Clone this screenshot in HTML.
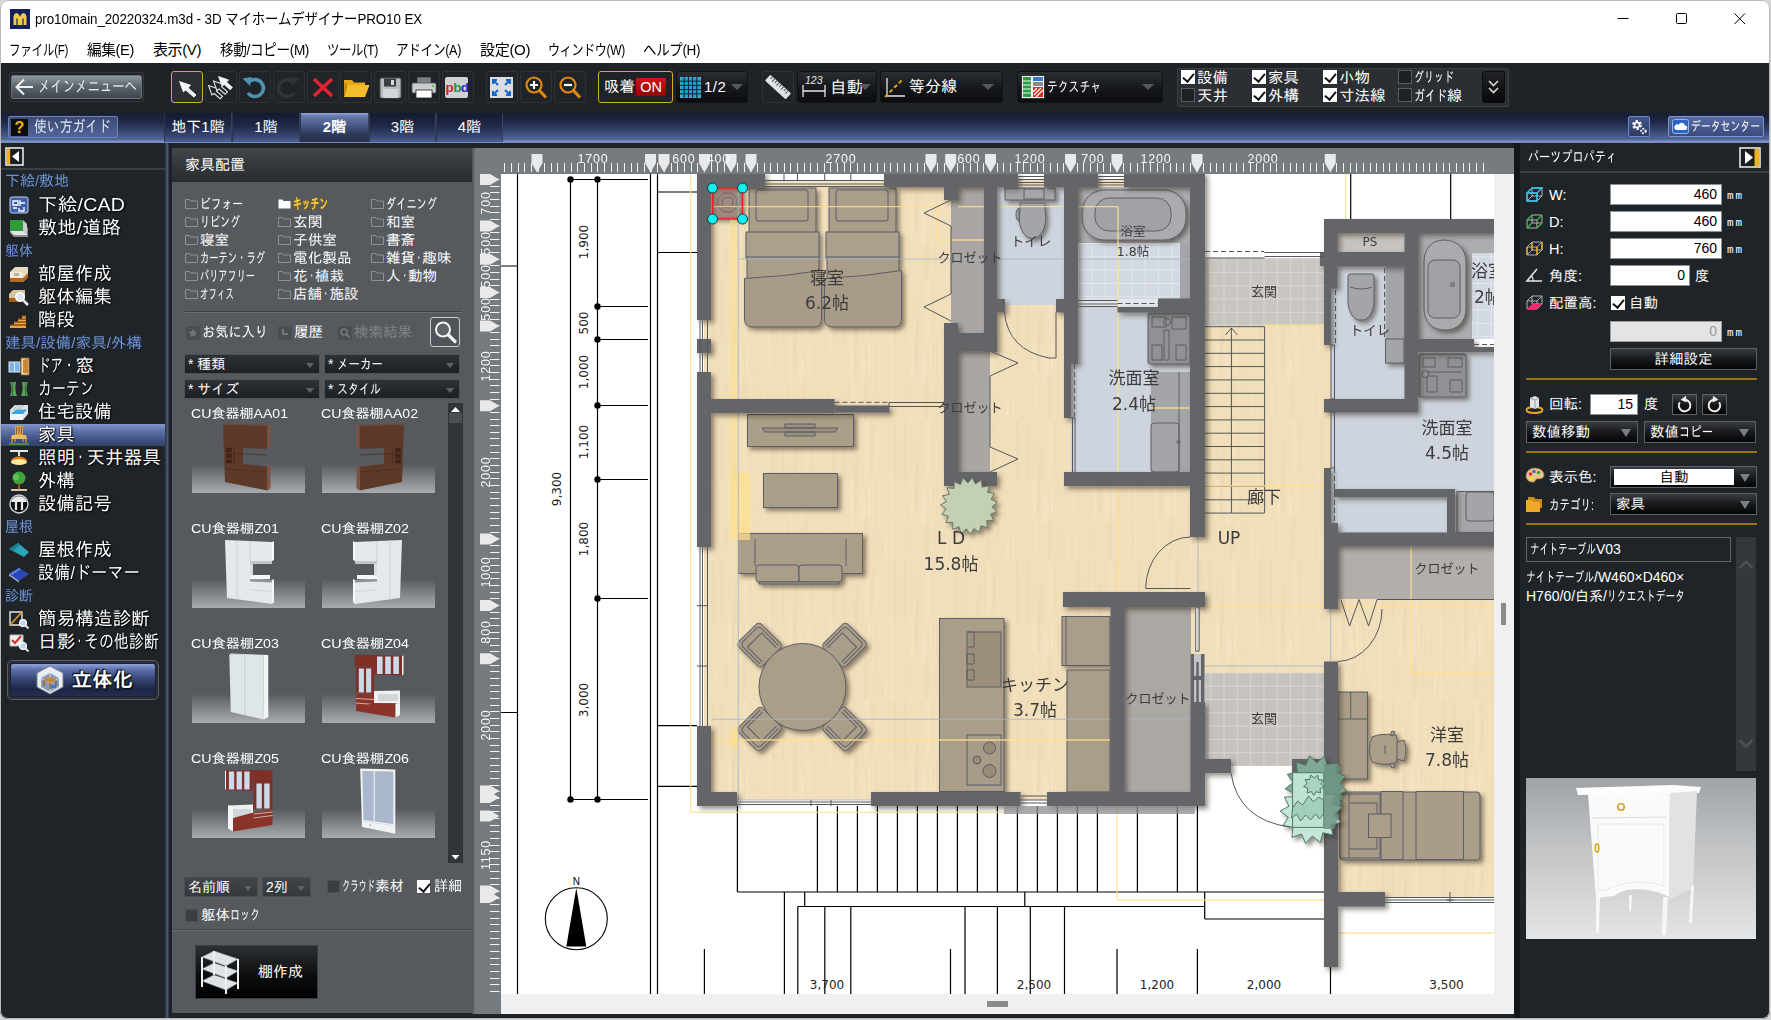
<!DOCTYPE html>
<html lang="ja">
<head>
<meta charset="utf-8">
<title>pro10main_20220324.m3d - 3D マイホームデザイナーPRO10 EX</title>
<style>
*{box-sizing:border-box;margin:0;padding:0}
html,body{width:1771px;height:1020px;overflow:hidden;background:#1f2428}
body{position:relative;font-family:"Liberation Sans","IPAGothic","Noto Sans CJK JP",sans-serif;color:#fff}
.abs{position:absolute}
.sx{display:inline-block;transform-origin:0 50%;white-space:nowrap}
.ui{font-family:"Liberation Sans","IPAGothic","Noto Sans CJK JP",sans-serif}
.noto{font-family:"Liberation Sans","Noto Sans CJK JP",sans-serif}
/* title + menu */
#title{left:0;top:0;width:1771px;height:63px;background:#fff;color:#000}
#title .cap{left:35px;top:8px;font-size:15px;line-height:22px;white-space:nowrap;font-family:"Liberation Sans","Noto Sans CJK JP",sans-serif;letter-spacing:-0.1px}
#menu>span{position:absolute;top:39px;font-size:15px;line-height:22px;white-space:nowrap;font-family:"Liberation Sans","Noto Sans CJK JP",sans-serif;color:#000;letter-spacing:-0.4px}
/* toolbar */
#tool{left:0;top:63px;width:1771px;height:50px;background:#1f2328}
.tb{position:absolute;top:71px;height:32px;width:32px;border:1px solid #2e3236;border-radius:3px;background:#202428}
.dd{position:absolute;top:71px;height:32px;border-radius:3px;background:linear-gradient(#2a2d31,#15171a 55%,#0b0c0e);border:1px solid #111315;font-size:16px;line-height:30px;white-space:nowrap}
.dd i{position:absolute;right:8px;top:12px;border:6px solid transparent;border-top:6px solid #55595e;border-bottom:0}
/* tabbar */
#tabs{left:0;top:113px;width:1771px;height:30px;background:linear-gradient(#171e33 0,#212b49 32%,#384871 62%,#526699 88%,#8499cf 96%,#6c82b6 100%)}
.tab{position:absolute;top:113px;height:29px;font-size:15px;line-height:28px;text-align:center;color:#fff;background:linear-gradient(#141b30,#1d2743 40%,#364670 80%,#4d6096);border-right:1px solid #34415f;border-left:1px solid #2a3550}
.tab.on{background:linear-gradient(#8da3d6 0,#6479ab 12%,#4a5c89 40%,#2c3857 75%,#27314c);font-weight:bold}
/* sidebar */
#side{left:0;top:143px;width:165px;height:877px;background:#1f2428}
.sec{position:absolute;left:5px;font-size:15px;line-height:18px;color:#6d92d8;white-space:nowrap}
.it{position:absolute;left:38px;font-size:18.5px;line-height:23px;color:#fff;white-space:nowrap;text-shadow:0 0 2px #000,1px 1px 2px #000;letter-spacing:0.2px}
.ic{position:absolute;left:8px;width:22px;height:20px}
/* furniture panel */
#pan{left:172px;top:148px;width:300px;height:865px;background:#565a5e}
.cat{position:absolute;font-size:13px;line-height:16px;color:#fff;white-space:nowrap}
.fold{position:absolute;width:10px;height:8px;border:1px solid #8a8d90;border-radius:1px}
.sel{position:absolute;height:20px;background:linear-gradient(#2e3135,#1e2023);border:1px solid #4f5357;font-size:14px;line-height:18px;color:#fff;white-space:nowrap;padding-left:3px}
.sel i{position:absolute;right:5px;top:8px;border:4px solid transparent;border-top:5px solid #5d6165;border-bottom:0}
.thl{position:absolute;font-size:13px;line-height:15px;color:#fff;white-space:nowrap}
.th{position:absolute;width:113px;height:70px;background:linear-gradient(#565a5e 0,#565a5e 58%,#777b7f 75%,#a9acaf 100%);overflow:hidden}
/* right panel */
#prop{left:1520px;top:143px;width:251px;height:877px;background:#1f2428}
.pl{position:absolute;font-size:14.5px;line-height:18px;color:#fff;white-space:nowrap}
.inp{position:absolute;height:21px;background:#fff;border:1px solid #8c8f92;color:#000;font-size:14px;line-height:19px;text-align:right;padding-right:4px;font-family:"Liberation Sans",sans-serif}
.gold{position:absolute;left:1526px;width:231px;height:2px;background:#9a7412}
.btn{position:absolute;height:22px;background:linear-gradient(#3a3d41,#17191b 50%,#050506);border:1px solid #5c6064;color:#fff;font-size:14.5px;line-height:20px;white-space:nowrap}
.btn i{position:absolute;right:6px;top:7px;border:5px solid transparent;border-top:8px solid #7b7f84;border-bottom:0}
</style>
</head>
<body>
<div id="title" class="abs">
 <svg class="abs" style="left:10px;top:9px" width="20" height="20" viewBox="0 0 20 20"><rect width="20" height="20" fill="#14205c"/><path d="M3.5 16 V9 Q3.5 4.5 6.5 4 Q9 4.5 10 8 Q11 4.5 13.5 4 Q16.5 4.5 16.5 9 V16 H13.6 V10 Q13.2 8.6 12.4 10 V16 H7.6 V10 Q6.8 8.6 6.4 10 V16 Z" fill="#f2c94a"/></svg>
 <div class="abs cap"><span class="sx" style="transform:scaleX(0.892);margin-right:-47.0px">pro10main_20220324.m3d - 3D マイホームデザイナーPRO10 EX</span></div>
 <svg class="abs" style="left:1600px;top:0" width="171" height="36" viewBox="0 0 171 36"><g stroke="#000" stroke-width="1" fill="none"><path d="M17.5 18.5h11"/><rect x="76.5" y="13.5" width="10" height="10" rx="1"/><path d="M134.5 13.5l10.5 10.5M145 13.5l-10.5 10.5"/></g></svg>
 <div id="menu">
  <span style="left:9px"><span class="sx" style="transform:scaleX(0.773);margin-right:-17.4px">ファイル(F)</span></span><span style="left:87px"><span class="sx" style="transform:scaleX(0.979);margin-right:-1.0px">編集(E)</span></span><span style="left:153px"><span class="sx" style="transform:scaleX(1.000);margin-right:0.0px">表示(V)</span></span><span style="left:220px"><span class="sx" style="transform:scaleX(0.908);margin-right:-9.1px">移動/コピー(M)</span></span><span style="left:327px"><span class="sx" style="transform:scaleX(0.826);margin-right:-10.8px">ツール(T)</span></span><span style="left:396px"><span class="sx" style="transform:scaleX(0.842);margin-right:-12.2px">アドイン(A)</span></span><span style="left:480px"><span class="sx" style="transform:scaleX(1.007);margin-right:0.3px">設定(O)</span></span><span style="left:548px"><span class="sx" style="transform:scaleX(0.802);margin-right:-19.0px">ウィンドウ(W)</span></span><span style="left:643px"><span class="sx" style="transform:scaleX(0.899);margin-right:-6.4px">ヘルプ(H)</span></span>
 </div>
</div>

<div id="tool" class="abs"></div>
<!-- main menu button -->
<div class="abs" style="left:9px;top:72px;width:135px;height:30px;border:1px solid #34383c;border-radius:3px"></div>
<div class="abs ui" style="left:11px;top:75px;width:131px;height:24px;background:linear-gradient(#8f979f,#5e666e 45%,#3f464d);border:1px solid #6c737a;border-radius:2px;color:#e9edf0;font-size:16px;line-height:22px;white-space:nowrap;padding-left:26px"><span class="sx" style="transform:scaleX(0.773);margin-right:-29.0px">メインメニューへ</span></div>
<svg class="abs" style="left:14px;top:76px" width="22" height="22" viewBox="0 0 22 22"><path d="M19 11H3M10 3.5L2.5 11L10 18.5" fill="none" stroke="#eef1f3" stroke-width="2"/></svg>
<!-- icon buttons -->
<div class="tb" style="left:171px;border:1.5px solid #d9a82a;background:#2c3035"></div>
<div class="tb" style="left:205px"></div><div class="tb" style="left:239px"></div><div class="tb" style="left:273px"></div><div class="tb" style="left:307px"></div><div class="tb" style="left:340px"></div><div class="tb" style="left:374px"></div><div class="tb" style="left:408px"></div><div class="tb" style="left:442px"></div>
<div class="tb" style="left:486px"></div><div class="tb" style="left:520px"></div><div class="tb" style="left:554px"></div><div class="tb" style="left:762px"></div>
<svg class="abs" style="left:171px;top:71px" width="420" height="32" viewBox="0 0 420 32">
 <!-- arrow -->
 <defs><path id="cur" d="M0 0L13.700 4.600L10.800 7.600L18.900 14.700L15.700 17.900L7.600 10.800L4.600 12.700Z"/></defs>
 <use href="#cur" transform="translate(7.200 9.200)" fill="#f4f4f4" stroke="#16181b" stroke-width=".800"/>
 <!-- multi arrows -->
 <use href="#cur" transform="translate(37.500 14.500) scale(.74)" fill="#1f2428" stroke="#e4e4e4" stroke-width="1.500"/>
 <use href="#cur" transform="translate(42.500 10) scale(.74)" fill="#1f2428" stroke="#e4e4e4" stroke-width="1.500"/>
 <use href="#cur" transform="translate(47.500 5.500) scale(.74)" fill="#f4f4f4" stroke="#f4f4f4" stroke-width="1"/>
 <!-- undo -->
 <path d="M78.5 10.5 A8.5 8.5 0 1 1 77 22" fill="none" stroke="#4f93b4" stroke-width="3.6"/><path d="M71.5 7.5 L80.5 6 L79 15 Z" fill="#4f93b4"/>
 <!-- redo (disabled) -->
 <path d="M121.5 10.5 A8.5 8.5 0 1 0 123 22" fill="none" stroke="#2e3438" stroke-width="3.6"/><path d="M128.5 7.5 L119.5 6 L121 15 Z" fill="#2e3438"/>
 <!-- X -->
 <path d="M143 8L161 25M161 8L143 25" stroke="#e0232e" stroke-width="3.6" fill="none"/>
 <!-- folder -->
 <path d="M173 9h8l2 2.5h11v4h-21z" fill="#e6a817"/><path d="M176.5 14h22l-4.5 12h-21z" fill="#f3bd2e"/><path d="M173 11v15l3.5-12" fill="#c98f10"/>
 <!-- save -->
 <rect x="209" y="7" width="21" height="20" rx="1.5" fill="#b9bcbf" stroke="#4b4f53" stroke-width="1"/><rect x="213" y="7.5" width="12" height="8" fill="#3a3d41"/><rect x="220" y="9" width="3" height="5" fill="#d8dadc"/><rect x="212" y="18" width="15" height="9" fill="#d4d6d8"/>
 <!-- print -->
 <rect x="246" y="6" width="14" height="7" fill="#7b7f83" stroke="#222" stroke-width=".6"/><rect x="241" y="12" width="24" height="10" rx="1.5" fill="#c9cccf" stroke="#55595d" stroke-width=".8"/><rect x="245" y="19" width="16" height="8" fill="#fff" stroke="#222" stroke-width=".8"/><rect x="261" y="14" width="2" height="2" fill="#6c3"/>
 <!-- pbd -->
 <rect x="274" y="6" width="23" height="21" rx="2" fill="#cfd1d3"/><text x="274.5" y="21" font-family="Liberation Sans,sans-serif" font-size="13.5" font-weight="bold" letter-spacing="-.6"><tspan fill="#d3202b">p</tspan><tspan fill="#1e9a35">b</tspan><tspan fill="#2330c8">d</tspan></text>
 <!-- fit -->
 <rect x="319" y="6" width="23" height="21" fill="#d9dde0"/><g stroke="#1766c9" stroke-width="2" fill="none"><path d="M322 13v-4h4M322 9l5 5M339 13v-4h-4M339 9l-5 5M322 20v4h4M322 24l5-5M339 20v4h-4M339 24l-5-5"/></g>
 <!-- zoom in -->
 <circle cx="363" cy="14" r="7.5" fill="#1f2428" stroke="#e08a10" stroke-width="2.2"/><path d="M368.5 19.5l6.5 7" stroke="#e08a10" stroke-width="3.2"/><path d="M359 14h8M363 10v8" stroke="#fff" stroke-width="2.2"/>
 <!-- zoom out -->
 <circle cx="397" cy="14" r="7.5" fill="#1f2428" stroke="#e08a10" stroke-width="2.2"/><path d="M402.5 19.5l6.5 7" stroke="#e08a10" stroke-width="3.2"/><path d="M393 14h8" stroke="#fff" stroke-width="2.2"/>
</svg>
<!-- snap ON -->
<div class="abs ui" style="left:598px;top:71px;width:75px;height:32px;border:1.5px solid #d9a82a;border-radius:3px;background:#1f2328;font-size:15.5px;line-height:29px;padding-left:5px;white-space:nowrap">吸着</div>
<div class="abs" style="left:636px;top:78px;width:30px;height:18px;background:linear-gradient(#d01414,#8e0606);color:#fff;font-size:14.5px;line-height:18px;text-align:center;font-family:'Liberation Sans',sans-serif">ON</div>
<!-- grid 1/2 -->
<div class="dd ui" style="left:676px;width:72px;padding-left:27px;font-size:15px;letter-spacing:.5px">1/2<i style="right:4px"></i></div>
<svg class="abs" style="left:680px;top:77px" width="21" height="21" viewBox="0 0 21 21"><rect width="21" height="21" fill="#1aa3d8" stroke="#9aa" stroke-width="1"/><path d="M4.2 0V21M8.4 0V21M12.6 0V21M16.8 0V21M0 4.2H21M0 8.4H21M0 12.6H21M0 16.8H21" stroke="#0b2230" stroke-width="1"/></svg>
<!-- ruler -->
<svg class="abs" style="left:762px;top:71px" width="32" height="32" viewBox="0 0 32 32"><g transform="rotate(42 16 16)"><rect x="2" y="12" width="28" height="8" rx="1" fill="#dfe2e4"/><path d="M5 12v3M8 12v4M11 12v3M14 12v4M17 12v3M20 12v4M23 12v3M26 12v4" stroke="#555" stroke-width="1"/></g></svg>
<!-- auto dimension -->
<div class="dd ui" style="left:797px;width:80px;padding-left:32px;font-size:16.5px">自動<i style="right:5px"></i></div>
<svg class="abs" style="left:800px;top:74px" width="28" height="26" viewBox="0 0 28 26"><path d="M3 11v12M25 11v12M3 17h22" stroke="#e6e6e6" stroke-width="1.3" fill="none"/><text x="5" y="10" font-size="10.5" font-style="italic" fill="#e6e6e6" font-family="Liberation Sans,sans-serif">123</text></svg>
<!-- equal division -->
<div class="dd ui" style="left:880px;width:123px;padding-left:28px;font-size:16px">等分線<i></i></div>
<svg class="abs" style="left:883px;top:76px" width="24" height="24" viewBox="0 0 24 24"><path d="M4 2v18h18" stroke="#e6e6e6" stroke-width="1.3" fill="none"/><path d="M2 21L19 4" stroke="#e0a018" stroke-width="2" stroke-dasharray="4 2.5"/></svg>
<!-- texture -->
<div class="dd ui" style="left:1017px;width:146px;padding-left:29px;font-size:14.5px"><span class="sx" style="transform:scaleX(0.745);margin-right:-18.5px">テクスチャ</span><i></i></div>
<svg class="abs" style="left:1021px;top:75px" width="24" height="24" viewBox="0 0 24 24"><rect x=".5" y=".5" width="23" height="23" fill="#f4f4f4" stroke="#333"/><rect x="2" y="2" width="8" height="20" fill="#2c9a48"/><path d="M2 6h8M2 10h8M2 14h8M2 18h8" stroke="#e8ffe8" stroke-width="1"/><rect x="12" y="2" width="10" height="4" fill="#3a78c9"/><rect x="12" y="7" width="10" height="4" fill="#8a8a8a"/><rect x="12" y="12" width="10" height="10" fill="#d62a1e"/><path d="M13 20l7-7M15 22l7-7M12 17l4-4" stroke="#fff" stroke-width="1.2"/></svg>
<!-- checkbox group -->
<div class="abs" style="left:1177px;top:68px;width:332px;height:39px;background:#2b2f33;border:1px solid #3b3f43;border-radius:2px"></div>
<div class="abs ui" id="cbs" style="left:0;top:0;font-size:15.5px;line-height:17px;white-space:nowrap">
 <b class="abs cb on" style="left:1181px;top:70px"></b><span class="abs" style="left:1197px;top:69px">設備</span>
 <b class="abs cb" style="left:1181px;top:88px"></b><span class="abs" style="left:1197px;top:87px">天井</span>
 <b class="abs cb on" style="left:1252px;top:70px"></b><span class="abs" style="left:1268px;top:69px">家具</span>
 <b class="abs cb on" style="left:1252px;top:88px"></b><span class="abs" style="left:1268px;top:87px">外構</span>
 <b class="abs cb on" style="left:1323px;top:70px"></b><span class="abs" style="left:1339px;top:69px">小物</span>
 <b class="abs cb on" style="left:1323px;top:88px"></b><span class="abs" style="left:1339px;top:87px">寸法線</span>
 <b class="abs cb" style="left:1398px;top:70px"></b><span class="abs" style="left:1414px;top:69px;font-size:14px"><span class="sx" style="transform:scaleX(0.714);margin-right:-16.0px">グリッド</span></span>
 <b class="abs cb" style="left:1398px;top:88px"></b><span class="abs" style="left:1414px;top:87px;font-size:15px"><span class="sx" style="transform:scaleX(0.733);margin-right:-12.0px">ガイド</span>線</span>
</div>
<div class="abs" style="left:1482px;top:71px;width:23px;height:32px;background:linear-gradient(#202225,#08090a);border:1px solid #0c0d0e;border-radius:2px"></div>
<svg class="abs" style="left:1482px;top:71px" width="23" height="32" viewBox="0 0 23 32"><path d="M7 10l4.5 4.5L16 10M7 17l4.5 4.5L16 17" stroke="#d8d8d8" stroke-width="1.6" fill="none"/></svg>
<style>
.cb{width:14px;height:14px;background:#1e2124;border:1px solid #585c60;display:block}
.cb.on{background:#fff;border-color:#fff}
.cb.on:after{content:"";position:absolute;left:3px;top:0px;width:5px;height:9px;border:solid #111;border-width:0 2px 2px 0;transform:rotate(40deg)}
</style>

<div id="tabs" class="abs"></div>
<div class="abs ui" style="left:8px;top:116px;width:110px;height:22px;border:1px solid #6f84b8;border-radius:2px;background:linear-gradient(#3b4a72,#52659a);font-size:16px;line-height:20px;padding-left:25px;color:#dfe6f5;white-space:nowrap;"><span class="sx" style="transform:scaleX(0.802);margin-right:-19.0px">使い方ガイド</span></div>
<div class="abs" style="left:11px;top:119px;width:17px;height:17px;background:#0b0c0e;color:#f0b21a;font:bold 16px/17px 'Liberation Sans',sans-serif;text-align:center">?</div>
<div class="tab ui" style="left:164px;width:68px">地下1階</div>
<div class="tab ui" style="left:232px;width:68px">1階</div>
<div class="tab ui on" style="left:300px;width:69px">2階</div>
<div class="tab ui" style="left:369px;width:67px">3階</div>
<div class="tab ui" style="left:436px;width:67px">4階</div>
<!-- gear + datacenter -->
<div class="abs" style="left:1628px;top:116px;width:22px;height:21px;background:linear-gradient(#44568a,#2c3a63);border:1px solid #7088c0;border-radius:2px"></div>
<svg class="abs" style="left:1628px;top:116px" width="22" height="21" viewBox="0 0 22 21"><circle cx="9" cy="9" r="3.6" fill="none" stroke="#fff" stroke-width="2.6" stroke-dasharray="2.2 1.6"/><circle cx="9" cy="9" r="2.4" fill="none" stroke="#fff" stroke-width="1.5"/><circle cx="15.5" cy="15" r="2.2" fill="none" stroke="#fff" stroke-width="2" stroke-dasharray="1.6 1.2"/></svg>
<div class="abs ui" style="left:1668px;top:116px;width:96px;height:21px;background:linear-gradient(#5569a3,#3b4b7d);border:1px solid #7d93cb;border-radius:2px;font-size:13.5px;line-height:20px;padding-left:22px;white-space:nowrap;color:#fff"><span class="sx" style="transform:scaleX(0.730);margin-right:-25.5px">データセンター</span></div>
<svg class="abs" style="left:1672px;top:119px" width="17" height="15" viewBox="0 0 17 15"><rect x=".5" y=".5" width="16" height="14" rx="2" fill="#2b64c8" stroke="#9bb4e8"/><path d="M4 11h9a2.3 2.3 0 0 0 0-4.6a3.4 3.4 0 0 0-6.4-.6A2.7 2.7 0 0 0 4 11z" fill="#fff"/></svg>

<div id="side" class="abs"></div>
<div class="abs" style="left:0;top:168px;width:165px;height:2px;background:#3a3f44"></div>
<div class="abs" style="left:165px;top:143px;width:7px;height:877px;background:linear-gradient(90deg,#2c3442,#4c5a78 40%,#1c2027 60%,#1f2428)"></div>
<svg class="abs" style="left:5px;top:147px" width="20" height="20" viewBox="0 0 20 20"><rect x="1" y="1" width="17" height="17" fill="#1b1e21" stroke="#e6e6e6" stroke-width="1.6"/><rect x="1.8" y="2" width="3.4" height="15" fill="#f0b21a"/><path d="M14 4v11L7 9.5z" fill="#fff"/></svg>
<div class="abs" style="left:0;top:424px;width:165px;height:22px;background:linear-gradient(#8398cf,#5c70a6 35%,#3a4a7a 80%,#34426c)"></div>
<div class="sec ui" style="top:172px"><span class="sx" style="transform:scaleX(0.997);margin-right:-0.2px">下絵/敷地</span></div>
<div class="sec ui" style="top:242px"><span class="sx" style="transform:scaleX(0.933);margin-right:-2.0px">躯体</span></div>
<div class="sec ui" style="top:334px"><span class="sx" style="transform:scaleX(1.034);margin-right:4.5px">建具/設備/家具/外構</span></div>
<div class="sec ui" style="top:518px"><span class="sx" style="transform:scaleX(0.933);margin-right:-2.0px">屋根</span></div>
<div class="sec ui" style="top:587px"><span class="sx" style="transform:scaleX(0.933);margin-right:-2.0px">診断</span></div>
<svg class="ic" style="top:195px" viewBox="0 0 22 20"><rect x="2" y="2" width="18" height="16" rx="2" fill="#3c5fae" stroke="#c9d4ee"/><path d="M5 6h5v4H5zM12 5v6M12 8h5M5 13h4M11 13v3h5v-4" stroke="#fff" stroke-width="1.3" fill="none"/></svg><div class="it ui" style="top:193px"><span class="sx" style="transform:scaleX(1.056);margin-right:4.6px">下絵/CAD</span></div>
<svg class="ic" style="top:218px" viewBox="0 0 22 20"><path d="M2 6h14l4 4v9H6l-4-4z" fill="#8a8f94"/><rect x="2" y="2" width="13" height="11" fill="#2f9a3c"/><path d="M15 2l4 4v11l-4-4z" fill="#c9cdd1"/><path d="M2 13h13l4 4H6z" fill="#e2e5e8"/></svg><div class="it ui" style="top:216px"><span class="sx" style="transform:scaleX(1.036);margin-right:2.9px">敷地/道路</span></div>
<svg class="ic" style="top:264px" viewBox="0 0 22 20"><path d="M2 8l5-5h13v10l-5 5H2z" fill="#e8d9bd"/><path d="M2 8h13v10H2z" fill="#f4ead6"/><path d="M2 14h13v4H2zM15 14l5-5v4l-5 5z" fill="#b46a1e"/><path d="M6 9h5v3H6z" fill="#b9b3a6"/></svg><div class="it ui" style="top:262px"><span class="sx" style="transform:scaleX(0.989);margin-right:-0.8px">部屋作成</span></div>
<svg class="ic" style="top:287px" viewBox="0 0 22 20"><path d="M1 7l4-4h12v8l-4 4H1z" fill="#d8c39c"/><path d="M1 11h12v4H1z" fill="#a55f1a"/><circle cx="12" cy="10" r="4.2" fill="#dfe8f2" stroke="#fff" stroke-width="1.6"/><path d="M15 13l5 5" stroke="#e9e9e9" stroke-width="2.6"/></svg><div class="it ui" style="top:285px"><span class="sx" style="transform:scaleX(0.989);margin-right:-0.8px">躯体編集</span></div>
<svg class="ic" style="top:310px" viewBox="0 0 22 20"><path d="M18 2v16H2v-3h4v-3h4V9h4V6h4V2z" fill="#e9a444"/><path d="M2 15h16M6 12h12M10 9h8M14 6h4" stroke="#8a4c12" stroke-width="1.4"/></svg><div class="it ui" style="top:308px"><span class="sx" style="transform:scaleX(0.989);margin-right:-0.4px">階段</span></div>
<svg class="ic" style="top:356px" viewBox="0 0 22 20"><rect x="1" y="6" width="11" height="10" fill="#7fb2e6" stroke="#dfe8f4"/><path d="M6.5 6v10" stroke="#dfe8f4"/><path d="M13 2h8v17h-8z" fill="#f0e2c4" stroke="#8b5a22"/><path d="M15 4l5-1.5v15L15 17z" fill="#c98532"/></svg><div class="it ui" style="top:354px"><span class="sx" style="transform:scaleX(0.668);margin-right:-18.6px">ドア・</span>窓</div>
<svg class="ic" style="top:379px" viewBox="0 0 22 20"><path d="M2 3h6c-1 5-1 9 1 14H2c2-5 2-9 0-14z" fill="#5aa15a"/><path d="M20 3h-6c1 5 1 9-1 14h7c-2-5-2-9 0-14z" fill="#5aa15a"/><path d="M4 3c1 5 1 9 0 14M18 3c-1 5-1 9 0 14" stroke="#2f6b2f" fill="none"/></svg><div class="it ui" style="top:377px"><span class="sx" style="transform:scaleX(0.749);margin-right:-18.8px">カーテン</span></div>
<svg class="ic" style="top:402px" viewBox="0 0 22 20"><path d="M2 8l5-5h13v9l-5 6H2z" fill="#dfe3e7"/><path d="M3 12h12l4-4.5H8z" fill="#3aa7e0"/><path d="M2 12h13v6H2z" fill="#f2f4f6"/><path d="M7 3l-5 5M10 3L5 8M13 3L8 8M16 3l-5 5" stroke="#aab0b6"/></svg><div class="it ui" style="top:400px"><span class="sx" style="transform:scaleX(0.989);margin-right:-0.8px">住宅設備</span></div>
<svg class="ic" style="top:425px" viewBox="0 0 22 20"><path d="M7 1h8v9H7z" fill="#d9a64a"/><path d="M8.5 2v7M11 2v7M13.5 2v7" stroke="#8e5f17"/><path d="M4 10h14l1 4H3z" fill="#e9bd62"/><path d="M4 14v5M18 14v5M7 14v3M15 14v3" stroke="#c08a2c" stroke-width="1.6"/><path d="M1 19h20" stroke="#4a8a4a" stroke-width="2"/></svg><div class="it ui" style="top:423px"><span class="sx" style="transform:scaleX(0.989);margin-right:-0.4px">家具</span></div>
<svg class="ic" style="top:448px" viewBox="0 0 22 20"><path d="M2 2h18v2H2z" fill="#e8e8e8"/><path d="M11 4v4" stroke="#ddd" stroke-width="2"/><path d="M3 13c1-6 15-6 16 0z" fill="#e67817"/><ellipse cx="11" cy="14" rx="8" ry="3" fill="#ffe9a0"/></svg><div class="it ui" style="top:446px">照明<span class="sx" style="transform:scaleX(0.588);margin-right:-7.7px">・</span>天井器具</div>
<svg class="ic" style="top:471px" viewBox="0 0 22 20"><circle cx="11" cy="7" r="6.5" fill="#3fa33a"/><circle cx="8" cy="6" r="3" fill="#62c355"/><path d="M10 12h2v6h-2z" fill="#8a5a22"/><path d="M3 19h16" stroke="#d9c9a0" stroke-width="2"/></svg><div class="it ui" style="top:469px"><span class="sx" style="transform:scaleX(0.989);margin-right:-0.4px">外構</span></div>
<svg class="ic" style="top:494px" viewBox="0 0 22 20"><circle cx="11" cy="10" r="9" fill="#0d0e10" stroke="#cfd3d7" stroke-width="1.4"/><path d="M3 8a8.5 8.5 0 0 1 16 0z" fill="#e8eaec"/><path d="M8 8v8M14 8v8" stroke="#e8eaec" stroke-width="2.2"/></svg><div class="it ui" style="top:492px"><span class="sx" style="transform:scaleX(0.989);margin-right:-0.8px">設備記号</span></div>
<svg class="ic" style="top:540px" viewBox="0 0 22 20"><path d="M1 9l9-6l11 9l-5 5z" fill="#2aa5b8"/><path d="M1 9l9-6l2 2l-7 6z" fill="#1d7f8f"/></svg><div class="it ui" style="top:538px"><span class="sx" style="transform:scaleX(0.989);margin-right:-0.8px">屋根作成</span></div>
<svg class="ic" style="top:563px" viewBox="0 0 22 20"><path d="M1 11l10-6l10 6l-10 7z" fill="#2b46b8"/><path d="M1 11l10-6l2 1l-9 6z" fill="#5f7fe8"/><path d="M1 11l10 7v1.5L1 12.5z" fill="#b8c2dc"/></svg><div class="it ui" style="top:561px"><span class="sx" style="transform:scaleX(0.868);margin-right:-15.5px">設備/ドーマー</span></div>
<svg class="ic" style="top:609px" viewBox="0 0 22 20"><path d="M2 3h12v13H2z" fill="none" stroke="#e9e9e9" stroke-width="1.4"/><path d="M2 16L14 3" stroke="#e0a018" stroke-width="1.6"/><circle cx="15" cy="14" r="3.4" fill="#bcd7f2" stroke="#fff" stroke-width="1.2"/><path d="M17.5 16.5l3 3" stroke="#e9e9e9" stroke-width="2"/></svg><div class="it ui" style="top:607px"><span class="sx" style="transform:scaleX(0.998);margin-right:-0.2px">簡易構造診断</span></div>
<svg class="ic" style="top:632px" viewBox="0 0 22 20"><path d="M2 3h13v11H2z" fill="#f2f2f2" stroke="#bbb"/><path d="M4 8l3 3l6-7" stroke="#d62a2a" stroke-width="2" fill="none"/><circle cx="15" cy="14" r="3.4" fill="#bcd7f2" stroke="#fff" stroke-width="1.2"/><path d="M17.5 16.5l3 3" stroke="#e9e9e9" stroke-width="2"/></svg><div class="it ui" style="top:630px">日影<span class="sx" style="transform:scaleX(0.481);margin-right:-9.7px">・</span><span class="sx" style="transform:scaleX(0.802);margin-right:-18.5px">その他診断</span></div>
<div class="abs" style="left:7px;top:660px;width:152px;height:40px;border:1px solid #5a5e63;border-radius:5px;background:#2a2d31"></div>
<div class="abs" style="left:10px;top:663px;width:146px;height:34px;border-radius:3px;border:1px solid #1a2138;background:linear-gradient(#8ea3d8 0,#5b70a8 18%,#33436f 50%,#1d2745 80%,#222d50)"></div>
<svg class="abs" style="left:34px;top:665px" width="32" height="30" viewBox="0 0 32 30"><path d="M16 1l13 7v14l-13 7l-13-7V8z" fill="#e9edf2" stroke="#7a8088"/><path d="M16 8l9 5v9l-9 5l-9-5v-9z" fill="#8a9bb8"/><path d="M16 8v19M7 13l9 5l9-5" stroke="#d5dbe4" fill="none"/><path d="M9 15l7-3l7 3l-7 3z" fill="#c98532"/><path d="M10 16v5M22 16v5M16 18v6" stroke="#8b5a22" stroke-width="1.4"/><path d="M17 20h5v3h-5z" fill="#3a78c9"/></svg>
<div class="abs ui" style="left:72px;top:667px;font-size:20px;line-height:26px;font-weight:bold;color:#fff;text-shadow:0 0 2px #000,1px 1px 2px #000,-1px -1px 1px #000;white-space:nowrap;letter-spacing:.5px">立体化</div>

<div id="pan" class="abs"></div>
<div class="abs" style="left:172px;top:148px;width:300px;height:34px;background:linear-gradient(#43474b,#34383b 50%,#2a2d30)"></div>
<div class="abs ui" style="left:185px;top:155px;font-size:15px;line-height:20px;color:#fff;white-space:nowrap">家具配置</div>
<svg class="abs" style="left:185px;top:198px" width="13" height="11" viewBox="0 0 13 11"><path d="M.5 1.5h4l1 1.5h7v7.5h-12z" fill="none" stroke="#8d9195"/></svg>
<div class="cat ui" style="left:200px;top:196px;font-size:14.5px"><span class="sx" style="transform:scaleX(0.741);margin-right:-15.0px">ビフォー</span></div>
<svg class="abs" style="left:185px;top:216px" width="13" height="11" viewBox="0 0 13 11"><path d="M.5 1.5h4l1 1.5h7v7.5h-12z" fill="none" stroke="#8d9195"/></svg>
<div class="cat ui" style="left:200px;top:214px;font-size:14.5px"><span class="sx" style="transform:scaleX(0.690);margin-right:-18.0px">リビング</span></div>
<svg class="abs" style="left:185px;top:234px" width="13" height="11" viewBox="0 0 13 11"><path d="M.5 1.5h4l1 1.5h7v7.5h-12z" fill="none" stroke="#8d9195"/></svg>
<div class="cat ui" style="left:200px;top:232px;font-size:14.5px"><span class="sx" style="transform:scaleX(1.000);margin-right:0.0px">寝室</span></div>
<svg class="abs" style="left:185px;top:252px" width="13" height="11" viewBox="0 0 13 11"><path d="M.5 1.5h4l1 1.5h7v7.5h-12z" fill="none" stroke="#8d9195"/></svg>
<div class="cat ui" style="left:200px;top:250px;font-size:14.5px"><span class="sx" style="transform:scaleX(0.640);margin-right:-36.5px">カーテン・ラグ</span></div>
<svg class="abs" style="left:185px;top:270px" width="13" height="11" viewBox="0 0 13 11"><path d="M.5 1.5h4l1 1.5h7v7.5h-12z" fill="none" stroke="#8d9195"/></svg>
<div class="cat ui" style="left:200px;top:268px;font-size:14.5px"><span class="sx" style="transform:scaleX(0.632);margin-right:-32.0px">バリアフリー</span></div>
<svg class="abs" style="left:185px;top:288px" width="13" height="11" viewBox="0 0 13 11"><path d="M.5 1.5h4l1 1.5h7v7.5h-12z" fill="none" stroke="#8d9195"/></svg>
<div class="cat ui" style="left:200px;top:286px;font-size:14.5px"><span class="sx" style="transform:scaleX(0.586);margin-right:-24.0px">オフィス</span></div>
<svg class="abs" style="left:278px;top:198px" width="13" height="11" viewBox="0 0 13 11"><path d="M.5 1.5h4l1 1.5h7v7.5h-12z" fill="#fff"/></svg>
<div class="cat ui" style="left:293px;top:196px;font-size:14.5px;color:#ffd23a;font-weight:bold;text-shadow:0 0 3px #a06a00"><span class="sx" style="transform:scaleX(0.603);margin-right:-23.0px">キッチン</span></div>
<svg class="abs" style="left:278px;top:216px" width="13" height="11" viewBox="0 0 13 11"><path d="M.5 1.5h4l1 1.5h7v7.5h-12z" fill="none" stroke="#8d9195"/></svg>
<div class="cat ui" style="left:293px;top:214px;font-size:14.5px"><span class="sx" style="transform:scaleX(1.021);margin-right:0.6px">玄関</span></div>
<svg class="abs" style="left:278px;top:234px" width="13" height="11" viewBox="0 0 13 11"><path d="M.5 1.5h4l1 1.5h7v7.5h-12z" fill="none" stroke="#8d9195"/></svg>
<div class="cat ui" style="left:293px;top:232px;font-size:14.5px"><span class="sx" style="transform:scaleX(1.011);margin-right:0.5px">子供室</span></div>
<svg class="abs" style="left:278px;top:252px" width="13" height="11" viewBox="0 0 13 11"><path d="M.5 1.5h4l1 1.5h7v7.5h-12z" fill="none" stroke="#8d9195"/></svg>
<div class="cat ui" style="left:293px;top:250px;font-size:14.5px"><span class="sx" style="transform:scaleX(1.009);margin-right:0.5px">電化製品</span></div>
<svg class="abs" style="left:278px;top:270px" width="13" height="11" viewBox="0 0 13 11"><path d="M.5 1.5h4l1 1.5h7v7.5h-12z" fill="none" stroke="#8d9195"/></svg>
<div class="cat ui" style="left:293px;top:268px;font-size:14.5px">花<span class="sx" style="transform:scaleX(0.517);margin-right:-7.0px">・</span>植栽</div>
<svg class="abs" style="left:278px;top:288px" width="13" height="11" viewBox="0 0 13 11"><path d="M.5 1.5h4l1 1.5h7v7.5h-12z" fill="none" stroke="#8d9195"/></svg>
<div class="cat ui" style="left:293px;top:286px;font-size:14.5px">店舗<span class="sx" style="transform:scaleX(0.517);margin-right:-7.0px">・</span>施設</div>
<svg class="abs" style="left:371px;top:198px" width="13" height="11" viewBox="0 0 13 11"><path d="M.5 1.5h4l1 1.5h7v7.5h-12z" fill="none" stroke="#8d9195"/></svg>
<div class="cat ui" style="left:386px;top:196px;font-size:14.5px"><span class="sx" style="transform:scaleX(0.703);margin-right:-21.5px">ダイニング</span></div>
<svg class="abs" style="left:371px;top:216px" width="13" height="11" viewBox="0 0 13 11"><path d="M.5 1.5h4l1 1.5h7v7.5h-12z" fill="none" stroke="#8d9195"/></svg>
<div class="cat ui" style="left:386px;top:214px;font-size:14.5px"><span class="sx" style="transform:scaleX(1.000);margin-right:0.0px">和室</span></div>
<svg class="abs" style="left:371px;top:234px" width="13" height="11" viewBox="0 0 13 11"><path d="M.5 1.5h4l1 1.5h7v7.5h-12z" fill="none" stroke="#8d9195"/></svg>
<div class="cat ui" style="left:386px;top:232px;font-size:14.5px"><span class="sx" style="transform:scaleX(1.000);margin-right:0.0px">書斎</span></div>
<svg class="abs" style="left:371px;top:252px" width="13" height="11" viewBox="0 0 13 11"><path d="M.5 1.5h4l1 1.5h7v7.5h-12z" fill="none" stroke="#8d9195"/></svg>
<div class="cat ui" style="left:386px;top:250px;font-size:14.5px">雑貨<span class="sx" style="transform:scaleX(0.517);margin-right:-7.0px">・</span>趣味</div>
<svg class="abs" style="left:371px;top:270px" width="13" height="11" viewBox="0 0 13 11"><path d="M.5 1.5h4l1 1.5h7v7.5h-12z" fill="none" stroke="#8d9195"/></svg>
<div class="cat ui" style="left:386px;top:268px;font-size:14.5px">人<span class="sx" style="transform:scaleX(0.517);margin-right:-7.0px">・</span>動物</div>
<div class="abs" style="left:185px;top:311px;width:277px;height:2px;background:#3e4246;border-bottom:1px solid #6a6e72"></div>
<svg class="abs" style="left:186px;top:326px" width="14" height="14" viewBox="0 0 14 14"><rect width="14" height="14" rx="2" fill="#4a4e52"/><path d="M7 2.5l1.4 3l3.1.3l-2.3 2.1l.7 3.1L7 9.4L4.1 11l.7-3.1L2.5 5.800l3.1-.3z" fill="#6f7377"/></svg>
<div class="cat ui" style="left:202px;top:324px;font-size:14.5px"><span class="sx" style="transform:scaleX(0.910);margin-right:-6.5px">お気に入り</span></div>
<svg class="abs" style="left:278px;top:326px" width="14" height="14" viewBox="0 0 14 14"><rect width="14" height="14" rx="2" fill="#4a4e52"/><path d="M5 3v5h5" stroke="#74787c" stroke-width="2" fill="none"/></svg>
<div class="cat ui" style="left:294px;top:324px;font-size:14.5px">履歴</div>
<svg class="abs" style="left:338px;top:326px" width="14" height="14" viewBox="0 0 14 14"><rect width="14" height="14" rx="2" fill="#4a4e52"/><circle cx="6" cy="6" r="3" stroke="#74787c" stroke-width="1.6" fill="none"/><path d="M8.500 8.500l3 3" stroke="#74787c" stroke-width="1.800"/></svg>
<div class="cat ui" style="left:354px;top:324px;font-size:14.5px;color:#7f8387">検索結果</div>
<div class="abs" style="left:430px;top:317px;width:30px;height:30px;border:1.500px solid #c9ccce;border-radius:3px;background:#50545a"></div>
<svg class="abs" style="left:430px;top:317px" width="30" height="30" viewBox="0 0 30 30"><circle cx="13" cy="12.500" r="7" fill="#5f6469" stroke="#f2f2f2" stroke-width="2"/><path d="M18.500 18l6.500 6.500" stroke="#f2f2f2" stroke-width="3.200" stroke-linecap="round"/></svg>
<div class="sel ui" style="left:184px;top:354px;width:136px">* 種類<i></i></div>
<div class="sel ui" style="left:324px;top:354px;width:136px">* <span class="sx" style="transform:scaleX(0.821);margin-right:-10.0px">メーカー</span><i></i></div>
<div class="sel ui" style="left:184px;top:379px;width:136px">* サイズ<i></i></div>
<div class="sel ui" style="left:324px;top:379px;width:136px">* <span class="sx" style="transform:scaleX(0.786);margin-right:-12.0px">スタイル</span><i></i></div>
<div class="thl ui" style="left:191px;top:406px"><span class="sx" style="transform:scaleX(1.083);margin-right:7.4px">CU食器棚AA01</span></div>
<div class="th" style="left:192px;top:423px"><svg width="113" height="70" viewBox="0 0 113 70"><g><path d="M31 1.500L75.500 3V26L51 25V41L75.500 43.500V67.500L33 59Z" fill="#5c3929"/><path d="M75.500 3l3-1v22l-3 2zM75.500 43.500l3-1.500v23l-3 2.500z" fill="#7d5444"/><path d="M33 30L75 32M33 46l42 3" stroke="#4c2e20" stroke-width=".800" fill="none"/><path d="M34.500 25h5v4h-5zM34.500 31h5v4h-5zM34.500 37h5v3h-5zM42 25v16" fill="#3e2418" stroke="#3e2418" stroke-width=".600"/><path d="M31 1.500l1-1l46.500 1.500l-3 1z" fill="#6e4838"/></g></svg></div>
<div class="thl ui" style="left:321px;top:406px"><span class="sx" style="transform:scaleX(1.083);margin-right:7.4px">CU食器棚AA02</span></div>
<div class="th" style="left:322px;top:423px"><svg width="113" height="70" viewBox="0 0 113 70"><g transform="translate(113,0) scale(-1,1)"><path d="M31 1.500L75.500 3V26L51 25V41L75.500 43.500V67.500L33 59Z" fill="#5c3929"/><path d="M75.500 3l3-1v22l-3 2zM75.500 43.500l3-1.500v23l-3 2.500z" fill="#7d5444"/><path d="M33 30L75 32M33 46l42 3" stroke="#4c2e20" stroke-width=".800" fill="none"/><path d="M34.500 25h5v4h-5zM34.500 31h5v4h-5zM34.500 37h5v3h-5zM42 25v16" fill="#3e2418" stroke="#3e2418" stroke-width=".600"/><path d="M31 1.500l1-1l46.500 1.500l-3 1z" fill="#6e4838"/></g></svg></div>
<div class="thl ui" style="left:191px;top:521px"><span class="sx" style="transform:scaleX(1.097);margin-right:7.8px">CU食器棚Z01</span></div>
<div class="th" style="left:192px;top:538px"><svg width="113" height="70" viewBox="0 0 113 70"><g><path d="M33 2L80 4V23H58V41L80 42V66L35 60Z" fill="#e4eaec"/><path d="M80 4l2-1v19l-2 1zM80 42l2-1v23l-2 2z" fill="#f6f7f7"/><path d="M45 2.500V62M58 3V23" stroke="#c9d0d4" stroke-width="1" fill="none"/><path d="M58 23h22v3H58z" fill="#bfc5c9"/><path d="M58 41l22 1v2.500l-22-1z" fill="#8e959b"/><path d="M58 37h20v4H58z" fill="#f4f6f7"/><path d="M58 26h3v11h-3z" fill="#d5dbde"/><path d="M58 52l22 1.500" stroke="#cdd3d6" stroke-width=".800"/></g></svg></div>
<div class="thl ui" style="left:321px;top:521px"><span class="sx" style="transform:scaleX(1.097);margin-right:7.8px">CU食器棚Z02</span></div>
<div class="th" style="left:322px;top:538px"><svg width="113" height="70" viewBox="0 0 113 70"><g transform="translate(113,0) scale(-1,1)"><path d="M33 2L80 4V23H58V41L80 42V66L35 60Z" fill="#e4eaec"/><path d="M80 4l2-1v19l-2 1zM80 42l2-1v23l-2 2z" fill="#f6f7f7"/><path d="M45 2.500V62M58 3V23" stroke="#c9d0d4" stroke-width="1" fill="none"/><path d="M58 23h22v3H58z" fill="#bfc5c9"/><path d="M58 41l22 1v2.500l-22-1z" fill="#8e959b"/><path d="M58 37h20v4H58z" fill="#f4f6f7"/><path d="M58 26h3v11h-3z" fill="#d5dbde"/><path d="M58 52l22 1.500" stroke="#cdd3d6" stroke-width=".800"/></g></svg></div>
<div class="thl ui" style="left:191px;top:636px"><span class="sx" style="transform:scaleX(1.097);margin-right:7.8px">CU食器棚Z03</span></div>
<div class="th" style="left:192px;top:653px"><svg width="113" height="70" viewBox="0 0 113 70"><path d="M37.300 1.500L71.800 2V66.600L38.800 59Z" fill="#dfe6e8"/><path d="M71.800 2l4.500 0V64l-4.500 2.600z" fill="#f3f4f4"/><path d="M52.800 1.800V62.500" stroke="#c5cdd1" stroke-width="1"/><path d="M37.300 1.500l1.500-1l37.500 1.500l-4.500 0z" fill="#f6f7f7"/></svg></div>
<div class="thl ui" style="left:321px;top:636px"><span class="sx" style="transform:scaleX(1.097);margin-right:7.8px">CU食器棚Z04</span></div>
<div class="th" style="left:322px;top:653px"><svg width="113" height="70" viewBox="0 0 113 70"><path d="M32.500 2L52 2V14L32.500 13.500Z" fill="#7e2f26"/><path d="M52 2L80 3V22.500L52 21.500Z" fill="#7e2f26"/><rect x="55.0" y="3.5" width="5.6" height="17.5" fill="#cdd9e8"/><rect x="63.2" y="3.5" width="5.6" height="17.5" fill="#cdd9e8"/><rect x="71.3" y="3.5" width="5.6" height="17.5" fill="#cdd9e8"/><path d="M34 14L52 14.500V41L34 40Z" fill="#7e2f26"/><rect x="36.8" y="15.5" width="5.1" height="24.0" fill="#cdd9e8"/><rect x="44.1" y="15.5" width="5.1" height="24.0" fill="#cdd9e8"/><path d="M52 38L78 37.500V50L52 50Z" fill="#eef0f1"/><path d="M56 41h20v7H56z" fill="#d0d5d8"/><path d="M34 41L52 41.500V58L34 55Z" fill="#8a3328"/><path d="M34 45.500l18 1M34 50l18 1.500" stroke="#e6cfc9" stroke-width=".800"/><path d="M34 55L52 50L73.500 50.500V64.500L34 58Z" fill="#8a3328"/><path d="M73.500 50.500l4.500-.5V62l-4.500 2.500z" fill="#f0f1f2"/><path d="M80 3l1.500-.5v19l-1.500 1z" fill="#f0f1f2"/></svg></div>
<div class="thl ui" style="left:191px;top:751px"><span class="sx" style="transform:scaleX(1.097);margin-right:7.8px">CU食器棚Z05</span></div>
<div class="th" style="left:192px;top:768px"><svg width="113" height="70" viewBox="0 0 113 70"><path d="M34 2.500L60.500 2V23L34 22Z" fill="#7e2f26"/><rect x="36.9" y="3.5" width="5.3" height="18.0" fill="#cdd9e8"/><rect x="44.6" y="3.5" width="5.3" height="18.0" fill="#cdd9e8"/><rect x="52.3" y="3.5" width="5.3" height="18.0" fill="#cdd9e8"/><path d="M60.500 2L80.500 2.500V14L60.500 14Z" fill="#7e2f26"/><path d="M61.500 14L80.500 14V41.500L61.500 41Z" fill="#7e2f26"/><rect x="64.4" y="15.5" width="5.4" height="25.0" fill="#cdd9e8"/><rect x="72.2" y="15.5" width="5.4" height="25.0" fill="#cdd9e8"/><path d="M36 37.500L61 36.500V54L41 57L36 54Z" fill="#eef0f1"/><path d="M40 41h19v8H40z" fill="#d0d5d8"/><path d="M41 50L61.500 44.500L80.500 42V57L41 63.500Z" fill="#8a3328"/><path d="M61.500 46l19-2M61.500 50l19-2.500" stroke="#e6cfc9" stroke-width=".800"/><path d="M34 2.500l-1 .5V21l1 1zM36 37.500l5 1V63.500l-5-3z" fill="#f4f5f5"/></svg></div>
<div class="thl ui" style="left:321px;top:751px"><span class="sx" style="transform:scaleX(1.097);margin-right:7.8px">CU食器棚Z06</span></div>
<div class="th" style="left:322px;top:768px"><svg width="113" height="70" viewBox="0 0 113 70"><path d="M38.200 .600L73.300 1.500V65.800L40 59Z" fill="#f1f2f3"/><path d="M40.300 3L71.300 3.500V56L41.500 52Z" fill="#a9b8cc"/><path d="M52.200 3.200V53.500" stroke="#e9edf1" stroke-width="1.200"/><path d="M41.500 53.500l30 4" stroke="#d9dcde" stroke-width=".800"/><circle cx="48" cy="57" r=".800" fill="#999"/></svg></div>
<div class="abs" style="left:448px;top:403px;width:15px;height:460px;background:#31353a"></div>
<div class="abs" style="left:449px;top:413px;width:13px;height:10px;background:#4b4f53"></div>
<svg class="abs" style="left:448px;top:403px" width="15" height="460" viewBox="0 0 15 460"><path d="M3 9l4.500-5l4.500 5z" fill="#fff"/><path d="M3.500 452h8l-4 4.500z" fill="#fff"/></svg>
<div class="sel ui" style="left:184px;top:877px;width:74px;background:linear-gradient(#404448,#35393d);border-color:#4b4f53">名前順<i></i></div>
<div class="sel ui" style="left:262px;top:877px;width:49px;background:linear-gradient(#404448,#35393d);border-color:#4b4f53">2列<i></i></div>
<div class="abs" style="left:327px;top:880px;width:13px;height:13px;background:#3a3e42;border:1px solid #4c5054"></div>
<div class="cat ui" style="left:342px;top:878px;font-size:14.5px"><span class="sx" style="transform:scaleX(0.569);margin-right:-25.0px">クラウド</span>素材</div>
<b class="abs cb on" style="left:417px;top:880px;width:13px;height:13px"></b>
<div class="cat ui" style="left:434px;top:878px;font-size:14.5px"><span class="sx" style="transform:scaleX(0.966);margin-right:-1.0px">詳細</span></div>
<div class="abs" style="left:185px;top:909px;width:13px;height:13px;background:#3a3e42;border:1px solid #4c5054"></div>
<div class="cat ui" style="left:201px;top:907px;font-size:14.5px">躯体<span class="sx" style="transform:scaleX(0.690);margin-right:-13.5px">ロック</span></div>
<div class="abs" style="left:172px;top:929px;width:300px;height:2px;background:#45494d;border-bottom:1px solid #65696d"></div>
<div class="abs" style="left:195px;top:945px;width:123px;height:54px;background:linear-gradient(#2d3033,#0d0e0f 55%,#000);border:1px solid #3b3e41"></div>
<svg class="abs" style="left:200px;top:949px" width="42" height="46" viewBox="0 0 42 46"><g fill="#dfe3e6" stroke="#9aa0a6" stroke-width=".600"><path d="M2 8l12-6l24 8l-12 7z"/><path d="M2 20l12-6l24 8l-12 7z"/><path d="M2 32l12-6l24 8l-12 7z"/></g><path d="M2 8v30M26 17v28M38 10v30M14 2v24" stroke="#eef0f2" stroke-width="2"/></svg>
<div class="abs ui" style="left:258px;top:962px;font-size:15px;line-height:20px;color:#fff;white-space:nowrap">棚作成</div>

<div class="abs" style="left:472px;top:148px;width:1042px;height:866px;background:#767b80"></div>
<div class="abs" style="left:472px;top:148px;width:3px;height:866px;background:linear-gradient(90deg,#505459,#6d7277)"></div>
<svg class="abs" style="left:0;top:0" width="1771" height="1020" viewBox="0 0 1771 1020" font-family="'DejaVu Sans','Liberation Sans',sans-serif">
<defs>
<pattern id="wood" width="61" height="140" patternUnits="userSpaceOnUse"><rect width="61" height="140" fill="#f1dfbc"/>
<rect x="19.4" y="2.6" width="1" height="67" fill="#f6e4c0" opacity="0.14"/>
<rect x="35.0" y="116.5" width="1" height="39" fill="#ecd5aa" opacity="0.20"/>
<rect x="14.4" y="62.7" width="3" height="29" fill="#f8e8c8" opacity="0.31"/>
<rect x="37.8" y="67.4" width="3" height="29" fill="#ecd5aa" opacity="0.13"/>
<rect x="13.3" y="63.5" width="2" height="34" fill="#fbeed2" opacity="0.23"/>
<rect x="34.3" y="64.0" width="1" height="69" fill="#f6e4c0" opacity="0.23"/>
<rect x="11.3" y="-5.4" width="3" height="71" fill="#f8e8c8" opacity="0.24"/>
<rect x="29.8" y="59.8" width="2" height="76" fill="#f6e4c0" opacity="0.30"/>
<rect x="21.7" y="17.3" width="1" height="37" fill="#f8e8c8" opacity="0.23"/>
<rect x="31.5" y="111.3" width="1.5" height="72" fill="#f6e4c0" opacity="0.32"/>
<rect x="7.1" y="42.7" width="1" height="74" fill="#ecd5aa" opacity="0.20"/>
<rect x="57.7" y="-8.4" width="1.5" height="61" fill="#e9d0a2" opacity="0.26"/>
<rect x="35.7" y="67.0" width="1" height="55" fill="#e9d0a2" opacity="0.21"/>
<rect x="39.8" y="-10.9" width="3" height="71" fill="#e6cb9c" opacity="0.28"/>
<rect x="17.1" y="37.9" width="1" height="68" fill="#ecd5aa" opacity="0.19"/>
<rect x="36.7" y="54.1" width="1.5" height="39" fill="#fbeed2" opacity="0.27"/>
<rect x="23.9" y="117.5" width="1" height="57" fill="#ecd5aa" opacity="0.20"/>
<rect x="16.7" y="0.5" width="3" height="53" fill="#e9d0a2" opacity="0.26"/>
<rect x="59.2" y="82.4" width="1" height="50" fill="#fbeed2" opacity="0.14"/>
<rect x="9.1" y="78.8" width="3" height="26" fill="#fbeed2" opacity="0.17"/>
<rect x="0.2" y="42.8" width="3" height="49" fill="#e9d0a2" opacity="0.31"/>
<rect x="41.4" y="57.3" width="1" height="65" fill="#ecd5aa" opacity="0.30"/>
<rect x="46.8" y="111.2" width="2" height="77" fill="#ecd5aa" opacity="0.20"/>
<rect x="6.2" y="75.1" width="1" height="29" fill="#fbeed2" opacity="0.21"/>
<rect x="6.6" y="70.1" width="3" height="32" fill="#fbeed2" opacity="0.23"/>
<rect x="56.9" y="72.1" width="1" height="30" fill="#f6e4c0" opacity="0.20"/>
<rect x="38.1" y="123.3" width="2" height="64" fill="#f8e8c8" opacity="0.14"/>
<rect x="29.3" y="126.7" width="1.5" height="56" fill="#f8e8c8" opacity="0.15"/>
<rect x="45.0" y="91.1" width="1" height="56" fill="#f6e4c0" opacity="0.12"/>
<rect x="57.1" y="59.2" width="3" height="35" fill="#f8e8c8" opacity="0.27"/>
<rect x="17.9" y="76.4" width="1.5" height="31" fill="#f6e4c0" opacity="0.19"/>
<rect x="10.0" y="95.8" width="3" height="60" fill="#e9d0a2" opacity="0.25"/>
<rect x="36.8" y="98.3" width="1" height="74" fill="#fbeed2" opacity="0.28"/>
<rect x="44.4" y="14.0" width="1.5" height="59" fill="#e6cb9c" opacity="0.13"/>
<rect x="1.7" y="21.9" width="3" height="42" fill="#e9d0a2" opacity="0.21"/>
<rect x="56.2" y="128.2" width="1.5" height="87" fill="#f8e8c8" opacity="0.16"/>
<rect x="13.6" y="9.5" width="3" height="38" fill="#f6e4c0" opacity="0.29"/>
<rect x="28.8" y="77.9" width="1" height="77" fill="#e6cb9c" opacity="0.14"/>
<rect x="23.3" y="86.7" width="1" height="38" fill="#ecd5aa" opacity="0.28"/>
<rect x="20.0" y="100.1" width="2" height="88" fill="#ecd5aa" opacity="0.20"/>
<rect x="56.8" y="88.7" width="1" height="36" fill="#f8e8c8" opacity="0.15"/>
<rect x="54.3" y="101.0" width="3" height="35" fill="#ecd5aa" opacity="0.25"/>
<rect x="21.0" y="62.3" width="1" height="34" fill="#e6cb9c" opacity="0.25"/>
<rect x="31.6" y="120.0" width="1" height="53" fill="#fbeed2" opacity="0.13"/>
<rect x="12.8" y="55.2" width="1.5" height="75" fill="#e9d0a2" opacity="0.23"/>
<rect x="50.1" y="-10.9" width="2" height="73" fill="#e6cb9c" opacity="0.24"/>
</pattern>
<pattern id="tile" x="1210.2" y="258.600" width="13.312" height="13.312" patternUnits="userSpaceOnUse"><rect width="13.312" height="13.312" fill="#c9c5c0"/><path d="M0 .5H13.400M.5 0V13.400" stroke="#dad7d3" stroke-width="1"/></pattern>
<pattern id="tile2" x="1210.2" y="672.400" width="13.312" height="13.312" patternUnits="userSpaceOnUse"><rect width="13.312" height="13.312" fill="#c6c3bf"/><path d="M0 .5H13.400M.5 0V13.400" stroke="#d9d6d3" stroke-width="1"/></pattern>
<pattern id="btile" x="1078" y="243" width="13.312" height="13.312" patternUnits="userSpaceOnUse"><rect width="13.312" height="13.312" fill="#d3d9e2"/><path d="M0 .5H13.400M.5 0V13.400" stroke="#e3e7ed" stroke-width="1"/></pattern>
<filter id="sh" x="-5%" y="-5%" width="115%" height="115%"><feDropShadow dx="3" dy="3" stdDeviation="2.500" flood-color="#2a2418" flood-opacity=".5"/></filter>
<filter id="sh2" x="-10%" y="-10%" width="130%" height="130%"><feDropShadow dx="3" dy="3" stdDeviation="2.200" flood-color="#2a2418" flood-opacity=".5"/></filter>
<clipPath id="cv"><rect x="501" y="174" width="993" height="820"/></clipPath>
</defs>
<rect x="501" y="174" width="993" height="820" fill="#fff"/>
<rect x="1494" y="174" width="20" height="840" fill="#f0f0f0"/><rect x="501" y="994" width="1013" height="20" fill="#f0f0f0"/>
<rect x="1501" y="603" width="5" height="22" fill="#8a8a8a"/><rect x="987" y="1001" width="21" height="6" fill="#8a8a8a"/>
<path d="M504.5 163V172M511.5 163V172M518.5 163V172M524.5 163V172M531.5 163V172M538.5 163V172M544.5 163V172M551.5 163V172M557.5 163V172M564.5 163V172M571.5 163V172M577.5 163V172M584.5 163V172M591.5 163V172M597.5 163V172M604.5 163V172M611.5 163V172M617.5 163V172M624.5 163V172M631.5 163V172M637.5 163V172M644.5 163V172M651.5 163V172M657.5 163V172M664.5 163V172M671.5 163V172M677.5 163V172M684.5 163V172M691.5 163V172M697.5 163V172M704.5 163V172M711.5 163V172M717.5 163V172M724.5 163V172M731.5 163V172M737.5 163V172M744.5 163V172M750.5 163V172M757.5 163V172M764.5 163V172M770.5 163V172M777.5 163V172M784.5 163V172M790.5 163V172M797.5 163V172M804.5 163V172M810.5 163V172M817.5 163V172M824.5 163V172M830.5 163V172M837.5 163V172M844.5 163V172M850.5 163V172M857.5 163V172M864.5 163V172M870.5 163V172M877.5 163V172M884.5 163V172M890.5 163V172M897.5 163V172M904.5 163V172M910.5 163V172M917.5 163V172M924.5 163V172M930.5 163V172M937.5 163V172M944.5 163V172M950.5 163V172M957.5 163V172M963.5 163V172M970.5 163V172M977.5 163V172M983.5 163V172M990.5 163V172M997.5 163V172M1003.5 163V172M1010.5 163V172M1017.5 163V172M1023.5 163V172M1030.5 163V172M1037.5 163V172M1043.5 163V172M1050.5 163V172M1057.5 163V172M1063.5 163V172M1070.5 163V172M1077.5 163V172M1083.5 163V172M1090.5 163V172M1097.5 163V172M1103.5 163V172M1110.5 163V172M1117.5 163V172M1123.5 163V172M1130.5 163V172M1137.5 163V172M1143.5 163V172M1150.5 163V172M1157.5 163V172M1163.5 163V172M1170.5 163V172M1176.5 163V172M1183.5 163V172M1190.5 163V172M1196.5 163V172M1203.5 163V172M1210.5 163V172M1216.5 163V172M1223.5 163V172M1230.5 163V172M1236.5 163V172M1243.5 163V172M1250.5 163V172M1256.5 163V172M1263.5 163V172M1270.5 163V172M1276.5 163V172M1283.5 163V172M1290.5 163V172M1296.5 163V172M1303.5 163V172M1310.5 163V172M1316.5 163V172M1323.5 163V172M1330.5 163V172M1336.5 163V172M1343.5 163V172M1350.5 163V172M1356.5 163V172M1363.5 163V172M1370.5 163V172M1376.5 163V172M1383.5 163V172M1389.5 163V172M1396.5 163V172M1403.5 163V172M1409.5 163V172M1416.5 163V172M1423.5 163V172M1429.5 163V172M1436.5 163V172M1443.5 163V172M1449.5 163V172M1456.5 163V172M1463.5 163V172M1469.5 163V172M1476.5 163V172M1483.5 163V172" stroke="#f4f4f4" stroke-width="1" fill="none"/>
<path d="M490 179.5H499.500M490 186.5H499.500M490 192.5H499.500M490 199.5H499.500M490 206.5H499.500M490 212.5H499.500M490 219.5H499.500M490 225.5H499.500M490 232.5H499.500M490 239.5H499.500M490 245.5H499.500M490 252.5H499.500M490 259.5H499.500M490 265.5H499.500M490 272.5H499.500M490 279.5H499.500M490 285.5H499.500M490 292.5H499.500M490 299.5H499.500M490 305.5H499.500M490 312.5H499.500M490 319.5H499.500M490 325.5H499.500M490 332.5H499.500M490 339.5H499.500M490 345.5H499.500M490 352.5H499.500M490 359.5H499.500M490 365.5H499.500M490 372.5H499.500M490 379.5H499.500M490 385.5H499.500M490 392.5H499.500M490 399.5H499.500M490 405.5H499.500M490 412.5H499.500M490 419.5H499.500M490 425.5H499.500M490 432.5H499.500M490 438.5H499.500M490 445.5H499.500M490 452.5H499.500M490 458.5H499.500M490 465.5H499.500M490 472.5H499.500M490 478.5H499.500M490 485.5H499.500M490 492.5H499.500M490 498.5H499.500M490 505.5H499.500M490 512.5H499.500M490 518.5H499.500M490 525.5H499.500M490 532.5H499.500M490 538.5H499.500M490 545.5H499.500M490 552.5H499.500M490 558.5H499.500M490 565.5H499.500M490 572.5H499.500M490 578.5H499.500M490 585.5H499.500M490 592.5H499.500M490 598.5H499.500M490 605.5H499.500M490 612.5H499.500M490 618.5H499.500M490 625.5H499.500M490 632.5H499.500M490 638.5H499.500M490 645.5H499.500M490 651.5H499.500M490 658.5H499.500M490 665.5H499.500M490 671.5H499.500M490 678.5H499.500M490 685.5H499.500M490 691.5H499.500M490 698.5H499.500M490 705.5H499.500M490 711.5H499.500M490 718.5H499.500M490 725.5H499.500M490 731.5H499.500M490 738.5H499.500M490 745.5H499.500M490 751.5H499.500M490 758.5H499.500M490 765.5H499.500M490 771.5H499.500M490 778.5H499.500M490 785.5H499.500M490 791.5H499.500M490 798.5H499.500M490 805.5H499.500M490 811.5H499.500M490 818.5H499.500M490 825.5H499.500M490 831.5H499.500M490 838.5H499.500M490 845.5H499.500M490 851.5H499.500M490 858.5H499.500M490 864.5H499.500M490 871.5H499.500M490 878.5H499.500M490 884.5H499.500M490 891.5H499.500M490 898.5H499.500M490 904.5H499.500M490 911.5H499.500M490 918.5H499.500M490 924.5H499.500M490 931.5H499.500M490 938.5H499.500M490 944.5H499.500M490 951.5H499.500M490 958.5H499.500M490 964.5H499.500M490 971.5H499.500M490 978.5H499.500M490 984.5H499.500M490 991.5H499.500" stroke="#f4f4f4" stroke-width="1" fill="none"/>
<path d="M531.5 154h11v9l-5.500 9.500l-5.500-9.500zM645.0 154h11v9l-5.500 9.500l-5.500-9.500zM658.5 154h11v9l-5.500 9.500l-5.500-9.500zM698.9 154h11v9l-5.500 9.500l-5.500-9.500zM725.5 154h11v9l-5.500 9.500l-5.500-9.500zM745.5 154h11v9l-5.500 9.500l-5.500-9.500zM925.5 154h11v9l-5.500 9.500l-5.500-9.500zM945.2 154h11v9l-5.500 9.500l-5.500-9.500zM985.0 154h11v9l-5.500 9.500l-5.500-9.500zM1065.0 154h11v9l-5.500 9.500l-5.500-9.500zM1111.5 154h11v9l-5.500 9.500l-5.500-9.500zM1191.5 154h11v9l-5.500 9.500l-5.500-9.500zM1324.8 154h11v9l-5.500 9.500l-5.500-9.500zM480 173.9h10l9.500 5.500l-9.500 5.500h-10zM480 220.5h10l9.500 5.500l-9.500 5.500h-10zM480 253.8h10l9.500 5.500l-9.500 5.500h-10zM480 287.1h10l9.500 5.500l-9.500 5.500h-10zM480 320.4h10l9.500 5.500l-9.500 5.500h-10zM480 400.3h10l9.500 5.500l-9.500 5.500h-10zM480 533.4h10l9.500 5.500l-9.500 5.500h-10zM480 600.0h10l9.500 5.500l-9.500 5.500h-10zM480 653.2h10l9.500 5.500l-9.500 5.500h-10zM480 785.5h10l9.500 5.500l-9.500 5.500h-10zM480 792.0h10l9.500 5.500l-9.500 5.500h-10zM480 810.5h10l9.500 5.500l-9.500 5.500h-10zM480 885.5h10l9.500 5.500l-9.500 5.500h-10zM480 892.0h10l9.500 5.500l-9.500 5.500h-10z" fill="#e9e9e9"/>
<g fill="#fff" font-size="12.5" letter-spacing=".8" text-anchor="middle" font-family="'Liberation Sans',sans-serif" font-weight="normal" opacity=".95">
<text x="593" y="162.500">1700</text>
<text x="684" y="162.500">600</text>
<text x="718.5" y="162.500">400</text>
<text x="841" y="162.500">2700</text>
<text x="969" y="162.500">600</text>
<text x="1030" y="162.500">1200</text>
<text x="1093" y="162.500">700</text>
<text x="1156" y="162.500">1200</text>
<text x="1263" y="162.500">2000</text>
<text transform="translate(489.500 203) rotate(-90)">700</text>
<text transform="translate(489.500 243) rotate(-90)">500</text>
<text transform="translate(489.500 276) rotate(-90)">500</text>
<text transform="translate(489.500 309) rotate(-90)">500</text>
<text transform="translate(489.500 366) rotate(-90)">1200</text>
<text transform="translate(489.500 472) rotate(-90)">2000</text>
<text transform="translate(489.500 572) rotate(-90)">1000</text>
<text transform="translate(489.500 632) rotate(-90)">800</text>
<text transform="translate(489.500 725) rotate(-90)">2000</text>
<text transform="translate(489.500 855) rotate(-90)">1150</text>
</g>
<g clip-path="url(#cv)">
<path d="M517.5 174L517.5 994M501 266L517.5 266M501 712.5L517.5 712.5M570.5 179.5L570.5 799.5M597.5 179.5L597.5 799.5M570.5 179.5L648 179.5M570.5 799.5L648 799.5M597.5 306.5L648 306.5M597.5 339.5L648 339.5M597.5 405.5L648 405.5M597.5 479.5L648 479.5M597.5 598.5L648 598.5M650.5 174L650.5 994M657.5 174L657.5 994M657.5 192L697 192M657.5 252.5L697 252.5M657.5 725.7L697 725.7M657.5 786.3L697 786.3M1350.7 174L1350.7 219M1450.7 174L1450.7 219M737.4 806L737.4 892M817.4 806L817.4 892M837.4 806L837.4 892M857.4 806L857.4 892M877.4 806L877.4 892M897.4 806L897.4 892M917.4 806L917.4 892M937.4 806L937.4 892M957.4 806L957.4 892M977.4 806L977.4 892M997.4 806L997.4 892M1017.4 806L1017.4 892M1037.4 806L1037.4 892M1057.4 806L1057.4 892M1077.4 806L1077.4 892M1097.4 806L1097.4 892M1137.4 806L1137.4 892M1177.4 806L1177.4 892M1197.4 806L1197.4 892M737.4 892L1324 892M797.8 906.5L1204.7 906.5M1204.7 892L1204.7 919M1204.7 919L1324 919M784.4 892L784.4 994M797.8 906.5L797.8 994M824.8 906.5L824.8 994M850.8 906.5L850.8 994M965 906.5L965 994M997.4 906.5L997.4 994M1030.3 906.5L1030.3 994M1064.5 906.5L1064.5 994M804.7 892L804.7 906.5M1024.8 892L1024.8 906.5M704.4 949L704.4 994M950.5 949L950.5 994M1117 949L1117 994M1197.4 949L1197.4 994M1330.5 949L1330.5 994" stroke="#000" stroke-width="1.200" fill="none"/>
<g fill="#000"><circle cx="570.5" cy="179.5" r="3.200"/><circle cx="597.5" cy="179.5" r="3.200"/><circle cx="597.5" cy="306.5" r="3.200"/><circle cx="597.5" cy="339.5" r="3.200"/><circle cx="597.5" cy="405.5" r="3.200"/><circle cx="597.5" cy="479.5" r="3.200"/><circle cx="597.5" cy="598.5" r="3.200"/><circle cx="570.5" cy="799.5" r="3.200"/><circle cx="597.5" cy="799.5" r="3.200"/></g>
<g fill="#222" font-size="12" text-anchor="middle">
<text transform="translate(588 242) rotate(-90)">1,900</text>
<text transform="translate(588 323) rotate(-90)">500</text>
<text transform="translate(588 372) rotate(-90)">1,000</text>
<text transform="translate(588 442) rotate(-90)">1,100</text>
<text transform="translate(588 539) rotate(-90)">1,800</text>
<text transform="translate(588 700) rotate(-90)">3,000</text>
<text transform="translate(561 489) rotate(-90)">9,300</text>
<text x="827" y="989">3,700</text>
<text x="1034" y="989">2,500</text>
<text x="1157" y="989">1,200</text>
<text x="1264" y="989">2,000</text>
<text x="1446.5" y="989">3,500</text>
</g>
<circle cx="576.300" cy="918.700" r="31" fill="#fff" stroke="#000" stroke-width="1.100"/><path d="M576.300 888l10 58.500h-20z" fill="#000"/><text x="576.300" y="885" font-size="10" text-anchor="middle" fill="#000" font-family="'Liberation Sans',sans-serif">N</text>
<g>
<rect x="704" y="180" width="494" height="620" fill="url(#wood)"/>
<rect x="1198" y="326" width="140" height="347" fill="url(#wood)"/>
<rect x="1331" y="546" width="163" height="352" fill="url(#wood)"/>
<rect x="765" y="174" width="119" height="6" fill="#fff"/><rect x="765" y="180" width="119" height="7" fill="#f3e2bf"/>
<rect x="737" y="800" width="134" height="6" fill="#fff"/>
<rect x="951" y="187" width="34" height="147" fill="#aaa6a3"/><rect x="957" y="351" width="33" height="122" fill="#aaa6a3"/><rect x="1124" y="606" width="67" height="187" fill="#aba7a3"/><rect x="1337" y="546" width="157" height="53" fill="#b3aeaa"/>
<rect x="997" y="187" width="67" height="118" fill="#ced4de"/>
<rect x="1078" y="187" width="112" height="56" fill="#abadb0"/><rect x="1078" y="243" width="102" height="56" fill="url(#btile)"/><rect x="1180" y="243" width="10" height="56" fill="#a3a5a9"/>
<rect x="1071" y="306" width="120" height="167" fill="#ced4de"/><rect x="1078" y="299" width="80" height="8" fill="#e4e7ec"/>
<rect x="1205" y="258" width="119" height="68" fill="url(#tile)"/><rect x="1205" y="673" width="119" height="93" fill="url(#tile2)"/>
<rect x="1337" y="233" width="68" height="19" fill="#c6c3be"/>
<rect x="1331" y="266" width="74" height="134" fill="#ced4de"/>
<rect x="1418" y="233" width="54" height="106" fill="#abadb0"/><rect x="1472" y="233" width="22" height="20" fill="#abadb0"/><rect x="1472" y="253" width="22" height="86" fill="url(#btile)"/>
<rect x="1331" y="412" width="163" height="121" fill="#ced4de"/><rect x="1418" y="352" width="76" height="60" fill="#ced4de"/>
</g>
<path d="M1205 326.7H1264.600M1205 340.0H1264.600M1205 353.3H1264.600M1205 366.6H1264.600M1205 379.9H1264.600M1205 393.3H1264.600M1205 406.6H1264.600M1205 419.9H1264.600M1205 433.2H1264.600M1205 446.5H1264.600M1205 459.8H1264.600M1205 473.1H1264.600M1205 486.4H1264.600M1205 499.8H1264.600M1205 513.1H1264.600M1264.600 326.700V512.900M1231.400 328V512.900M1225.500 335l5.900-7l5.900 7" stroke="#55565a" stroke-width="1" fill="none"/>
<g fill="#a3a5a9" stroke="#5d5f63" stroke-width="1" filter="url(#sh2)">
<rect x="1005" y="188" width="50" height="12" /><rect x="1024" y="189" width="20" height="10"/><path d="M1020 203h25v8c2 8 0 20-6 25c-4 3-9 3-13 0c-6-5-8-17-6-25z"/><path d="M1019 208c-4 1-4 12 0 13z"/>
<rect x="1082" y="190" width="104" height="50" rx="22" fill="#a9abae"/><rect x="1095" y="198" width="76" height="33" rx="14" fill="#a0a2a6"/>
<rect x="1148" y="313" width="42" height="51" rx="2" fill="#8f9195"/><path d="M1152 317h14v10h-14zM1172 317h14v12h-14zM1152 345h10v15h-10zM1176 345h10v15h-10zM1164 330h5v30h-5z" fill="none"/><circle cx="1167" cy="322" r="3.500" fill="none"/>
<rect x="1151" y="372" width="39" height="100" stroke="none"/><rect x="1151" y="423" width="28" height="49" rx="3"/><path d="M1179 372v100" fill="none"/><circle cx="1178.500" cy="442" r="1.600" fill="none"/>
<rect x="1385.600" y="266" width="18.400" height="73" stroke="none"/><rect x="1385.600" y="339" width="18.400" height="24"/><path d="M1348 276q0-2 2-2h22q2 0 2 2v24c0 10-4 18-10 20h-6c-6-2-10-10-10-20z"/><path d="M1350 287q12 4 22 0" fill="none"/>
<path d="M1424 262c0-14 8-22 20-22s22 8 22 22v46c0 14-8 22-21 22s-21-8-21-22z" fill="#a9abae"/><rect x="1428" y="260" width="32" height="58" rx="7" fill="#a0a2a6"/><rect x="1451" y="283" width="3" height="3" fill="none"/>
<rect x="1419" y="354" width="47" height="43" rx="2" fill="#8f9195"/><path d="M1423 358h12v9h-12zM1448 358h14v9h-14zM1427 376h10v16h-10zM1450 380h12v12h-12zM1426 372h36" fill="none"/><circle cx="1425.500" cy="374" r="3.500" fill="none"/>
<rect x="1457" y="491.500" width="37" height="41"/><rect x="1466" y="492" width="28" height="29" rx="3"/>
</g>
<g fill="#aa9e88" stroke="#5b5d68" stroke-width="1" filter="url(#sh2)">
<rect x="713" y="188" width="29" height="30" fill="#8f897e"/><path d="M723.500 193h8l5.500 5.500v8l-5.500 5.500h-8l-5.500-5.500v-8z" fill="#8a8479"/><rect x="722.500" y="197.500" width="10" height="10" rx="3" fill="#918b80"/>
<rect x="749" y="188" width="67" height="60"/><rect x="756" y="190" width="52" height="31" rx="2" fill="#aa9e8a"/><rect x="746" y="232" width="73" height="26" fill="#ac9f8b"/><rect x="747" y="257" width="72" height="24"/><path d="M744.5 278.500q40-2 77-8v48.500q0 8-8 8h-61q-8 0-8-8z" fill="#a89c88"/>
<rect x="829" y="188" width="67" height="60"/><rect x="836" y="190" width="52" height="31" rx="2" fill="#aa9e8a"/><rect x="826" y="232" width="73" height="26" fill="#ac9f8b"/><rect x="827" y="257" width="72" height="24"/><path d="M824.5 278.500q40-2 77-8v48.500q0 8-8 8h-61q-8 0-8-8z" fill="#a89c88"/>
<rect x="747.500" y="414.500" width="106" height="32"/><path d="M762 428h76l-3 4h-70zM785 424h30v4h-30zM785 432h30v4h-30z" fill="#9d917e"/>
<rect x="763.500" y="473.500" width="74" height="34"/>
<rect x="738.500" y="533.500" width="124" height="40"/><path d="M755 539v27M846 539v27" fill="none"/><rect x="756" y="565" width="43" height="17" rx="3"/><rect x="799" y="565" width="43" height="17" rx="3"/><path d="M759 582h80v2h-80z"/>
<g transform="translate(759.5 645) rotate(-45)"><rect x="-16" y="-17" width="32" height="34" rx="4"/><path d="M-13 14v-24q0-4 4-4h18q4 0 4 4v24" fill="none"/><path d="M-10 14v-21h20v21" fill="none"/></g>
<g transform="translate(844.5 645) rotate(45)"><rect x="-16" y="-17" width="32" height="34" rx="4"/><path d="M-13 14v-24q0-4 4-4h18q4 0 4 4v24" fill="none"/><path d="M-10 14v-21h20v21" fill="none"/></g>
<g transform="translate(759.5 729) rotate(-135)"><rect x="-16" y="-17" width="32" height="34" rx="4"/><path d="M-13 14v-24q0-4 4-4h18q4 0 4 4v24" fill="none"/><path d="M-10 14v-21h20v21" fill="none"/></g>
<g transform="translate(844.5 729) rotate(135)"><rect x="-16" y="-17" width="32" height="34" rx="4"/><path d="M-13 14v-24q0-4 4-4h18q4 0 4 4v24" fill="none"/><path d="M-10 14v-21h20v21" fill="none"/></g>
<circle cx="802.500" cy="687" r="43.500"/>
<rect x="939.500" y="618.500" width="64.500" height="173"/><rect x="967" y="632" width="34" height="55" fill="#9b8f7c"/><path d="M967 632h7v15h-7M967 654h7v10h-7zM967 670h7v10h-7z" fill="none"/><rect x="967" y="735" width="34" height="50" fill="#a89c88"/><circle cx="989.500" cy="748" r="6" fill="#978b78"/><circle cx="977" cy="760" r="4" fill="#978b78"/><circle cx="989.500" cy="771" r="6.500" fill="#978b78"/>
<rect x="1062" y="616.500" width="48" height="49"/><path d="M1066 616.500v49" fill="none"/><rect x="1067" y="670" width="43" height="122"/>
<rect x="1338" y="692" width="29.500" height="87"/><path d="M1338 719h29.500M1350.700 692v27" fill="none"/>
<path d="M1372 737q8-4 24-2q4 14 0 28q-14 3-24-1q-5-12 0-25z"/><path d="M1397 742l7-2q4 10 0 21l-7-2zM1390 735l2-4l3 1l-2 4zM1390 764l2 4l3-1l-2-4z"/><path d="M1385 745v9" fill="none"/>
<rect x="1340" y="792" width="140" height="68" rx="3"/><rect x="1340" y="794" width="40" height="64" fill="#a89c88"/><path d="M1349 794v64M1349 803h28v46h-28" fill="none"/><path d="M1381 791.500h22v68h-22zM1416 791.500h47.500v68h-47.500z" fill="#a99d89"/><rect x="1368.500" y="814" width="22.500" height="23.500"/>
</g>
<path d="M690.6 174L690.6 812.4M690.6 812.4L1003 812.4M1117 806L1117 900M1117 900L1324 900M1338 933L1494 933M1205 607L1324 607M1338 607L1494 607M1411 546L1411 673M1411 673L1494 673M1118 206.7L1118 792M1265 325L1324 325M1345.7 174L1345.7 219M712 206.7L944 206.7M958 206.7L984 206.7M997 206.7L1064 206.7M1078 206.7L1118 206.7M937 206.7L937 240M937 240L984 240M712 740L1110 740M1151 408L1190 408M1205 486L1324 486" stroke="#ffe08c" stroke-width="1.300" fill="none" opacity=".85"/>
<rect x="730" y="219" width="7" height="254" fill="#ffe08c" opacity=".45"/><rect x="730" y="473" width="20" height="67" fill="#ffe08c" opacity=".7"/><rect x="730" y="728" width="8" height="20" fill="#ffe08c" opacity=".6"/>
<path d="M738.3 187L738.3 800M738.3 259L1190 259M712 719.3L1190 719.3M1205 666L1324 666M1198 537L1198 592M1330.7 609L1330.7 661M738.3 800L871 800" stroke="#aab3c6" stroke-width="1.100" fill="none" opacity=".8"/>
<g filter="url(#sh)" fill="#646569">
<path d="M697 172H711V320H697zM697 339H711V353H697zM697 372H711V547H697zM697 726H711V806H697zM697 172H765V187H697zM884 172H1018V187H884zM1044 172H1098V187H1044zM1124 172H1205V187H1124zM1190 172H1205V537H1190zM697 792H737V806H697zM871 792H1020.5V806H871zM1047 792H1205V806H1047zM711 399H834.5V413H711zM944 187H958V200H944zM984 187H997V352H984zM944 333H997V351H944zM944 323H958V333H944zM944 351H958V486H944zM944 472H997V486H944zM997 299H1005V312.5H997zM1056 299H1064V312.5H1056zM1064 172H1078V364H1064zM1064 364H1071V418H1064zM1158 298.5H1190V312.5H1158zM1117.5 307H1158V312.5H1117.5zM1064 472H1205V486H1064zM1063 592H1205V607H1063zM1110.5 607H1124V806H1110.5zM1190.5 702H1205V806H1190.5zM1204 759H1231V773H1204zM1292 759H1324V773H1292zM1324 219H1494V233H1324zM1324 219H1337.5V288.5H1324zM1320 252.5H1324V266H1320zM1324 288H1331V345H1324zM1324 252H1418V266.5H1324zM1404.5 233H1418V412.5H1404.5zM1324 399H1418V412.5H1324zM1418 339H1474V352H1418zM1474 347H1494V352H1474zM1324 468H1331V523H1324zM1334 489H1455V497H1334zM1447 489H1455V533H1447zM1324 532.5H1494V546H1324zM1324 523H1338V609H1324zM1324 661.5H1338V967H1324zM1338 892H1385V906.5H1338z"/>
<rect x="834.500" y="405.500" width="55" height="7"/>
</g>
<g filter="url(#sh2)" stroke="#4f7868" stroke-width="1"><path d="M1346.7 790.6L1337.3 794.8L1341.0 804.3L1330.7 803.7L1329.6 813.9L1320.9 808.5L1315.1 817.0L1309.8 808.2L1300.8 813.0L1300.3 802.8L1290.0 802.9L1294.3 793.5L1285.1 788.8L1293.3 782.6L1287.3 774.2L1297.5 772.4L1296.1 762.2L1305.9 765.3L1309.5 755.7L1316.7 763.0L1324.3 756.1L1327.3 766.0L1337.2 763.4L1335.3 773.5L1345.3 775.9L1338.9 783.9z" fill="#7fa896"/><path d="M1340.6 822.2L1330.7 824.9L1333.0 834.9L1322.9 832.7L1320.3 842.6L1312.4 836.0L1305.5 843.5L1301.6 834.0L1291.9 837.4L1292.9 827.2L1282.8 825.8L1288.4 817.2L1280.1 811.2L1289.0 806.2L1284.4 797.0L1294.7 796.8L1294.9 786.5L1304.1 791.1L1309.1 782.1L1315.1 790.4L1323.7 784.7L1325.1 794.9L1335.4 793.8L1332.0 803.5L1341.5 807.3L1334.0 814.3z" fill="#c5e6d8"/><rect x="1292.600" y="772.700" width="31.200" height="54.700" fill="#bfe2d2"/><path d="M1292.600 808l5-7l5 4l6-9l5 6l5-5l5 3v14l-4 5l-4-5l-5 6l-5-5l-5 6l-4-7l-5 4z" fill="#a3d0ba"/><path d="M1324.3 787.1L1320.0 788.7L1320.5 793.2L1316.2 791.6L1313.7 795.5L1311.4 791.5L1307.0 792.9L1307.9 788.3L1303.6 786.6L1307.1 783.6L1305.0 779.5L1309.6 779.5L1310.7 775.0L1314.2 778.0L1317.8 775.2L1318.6 779.8L1323.2 780.0L1320.9 784.0z" fill="#a8d4c0"/></g><path d="M1324 764h14l3 4l-2 5l4 4l-3 5l4 5l-4 5l3 6l-4 4l2 6l-4 4l2 6l-3 5l-2 6h-10z" fill="#6c9283" opacity=".85"/>
<g filter="url(#sh2)"><path d="M996.9 511.7L990.5 514.2L993.6 520.4L986.6 520.7L987.6 527.6L980.9 525.7L979.5 532.5L973.9 528.5L970.4 534.5L966.3 528.8L961.1 533.4L959.0 526.7L952.6 529.3L952.8 522.4L945.9 522.7L948.4 516.2L941.7 514.3L946.2 509.0L940.5 505.0L946.5 501.4L942.4 495.8L949.2 494.4L947.1 487.7L954.0 488.5L954.2 481.6L960.5 484.6L963.0 478.1L967.9 483.0L972.3 477.7L975.4 483.9L981.3 480.3L982.2 487.2L989.0 485.7L987.6 492.5L994.5 493.3L991.0 499.3L997.3 502.3L992.0 506.8z" fill="#c3d0b4" stroke="#6b7668" stroke-width="1"/></g>
<path d="M765 180.500H884M765 184H884M765 186.500H884M784 174v6M797.500 174v6M824.700 174v6M850.800 174v6M700 320V372M702.500 320V339M702.500 353V372M707.500 320V372M700 547V726M702.500 547V726M707.500 547V726M697 605.700h10M697 666h10M737 802H871M737 804.500H871M811 800v6M831 800v6M1020.500 796H1047M1020.500 800H1047M1020.500 803H1047M1018 176.500H1044M1018 179.500H1044M1018 182.500H1044M1018 185H1044M1098 176.500H1124M1098 179.500H1124M1098 182.500H1124M1098 185H1124M889 402.500H944M889 406.500H944M889 402.500V406.500M951 200L924 213L951 226M951 226V294M951 294L924 307L951 321M990 351L1018 363L990 376M990 376V447M990 447L1018 459L990 472M1004.500 312.500Q1008 350 1049 358L1056 358V312.500M1078 300.500H1117.500M1078 304H1117.500M1078 306.500H1117.500M1071 418h4v54M1072.500 418v54M1190.500 537A45 51.500 0 0 0 1145.700 588.500H1190.500M1196 607V651M1199 607V651M1196 651h3M1331 345h3.500v54h-3.500zM1331 412h3.500v56h-3.500zM1264.500 252.500H1324M1264.500 256.500H1324M1205 258H1264.500M1382 609A45 52.500 0 0 1 1338 661.500M1341 600L1349.600 626L1359 599.500L1368.600 626L1377 599.500H1494M1231 773Q1238 820 1290 827M1385 897.500H1494M1385 900H1494M1385 902.500H1494M1450 892v10M1446 900h8" stroke="#55565a" stroke-width="1" fill="none"/>
<path d="M1074.600 364V418M1117.500 303.500H1158M834.500 402.300H889M1205 251.500H1264M1334.500 468V523M1474 344.500H1494M1335.500 290V345M1384.500 268V338" stroke="#55565a" stroke-width="1" stroke-dasharray="5 3" fill="none"/>
<rect x="1190.500" y="654" width="14" height="48" fill="#c4c4c6"/><path d="M1190.500 654h3.500v48h-3.500zM1201 654h3.500v48h-3.500zM1196.300 662h2.400v40h-2.400zM1194 676h7v4h-7z" fill="#646569"/><rect x="1195.500" y="608" width="3.500" height="43" fill="#d4d4d4" stroke="#6a6a6e" stroke-width=".800"/>
<rect x="1003.800" y="806" width="191" height="8" fill="#8e8e8e" opacity=".75"/>
<g fill="#3c3c3c" text-anchor="middle" font-family="'DejaVu Sans','Noto Sans CJK JP',sans-serif">
<text x="827" y="284" font-size="17">寝室</text>
<text x="827" y="309" font-size="17">6.2帖</text>
<text x="970" y="262" font-size="13">クロゼット</text>
<text x="970" y="412" font-size="13">クロゼット</text>
<text x="1031" y="246" font-size="13.5">トイレ</text>
<text x="1133" y="236" font-size="12.5">浴室</text>
<text x="1133" y="256" font-size="12.5">1.8帖</text>
<text x="1264" y="296" font-size="13">玄関</text>
<text x="1134" y="384" font-size="17">洗面室</text>
<text x="1134" y="410" font-size="17">2.4帖</text>
<text x="951" y="544" font-size="17">L D</text>
<text x="951" y="570" font-size="17">15.8帖</text>
<text x="1264" y="503" font-size="17">廊下</text>
<text x="1229" y="544" font-size="17">UP</text>
<text x="1035" y="691" font-size="17">キッチン</text>
<text x="1035" y="716" font-size="17">3.7帖</text>
<text x="1158" y="703" font-size="13">クロゼット</text>
<text x="1264" y="723" font-size="13">玄関</text>
<text x="1370" y="246" font-size="12">PS</text>
<text x="1370" y="335" font-size="13.5">トイレ</text>
<text x="1447" y="434" font-size="17">洗面室</text>
<text x="1447" y="459" font-size="17">4.5帖</text>
<text x="1447" y="573" font-size="13">クロゼット</text>
<text x="1447" y="741" font-size="17">洋室</text>
<text x="1447" y="766" font-size="17">7.8帖</text>
<text x="1471" y="277" font-size="17" text-anchor="start">浴室</text><text x="1474" y="303" font-size="17" text-anchor="start">2帖</text>
</g>
<rect x="712.500" y="188" width="30" height="31" fill="#d08a7a" opacity=".25"/><rect x="712.500" y="188" width="30" height="31" fill="none" stroke="#ff1a1a" stroke-width="1.300"/>
<circle cx="712.5" cy="188" r="5" fill="#12eef0" stroke="#103a3c" stroke-width="1"/>
<circle cx="742.5" cy="188" r="5" fill="#12eef0" stroke="#103a3c" stroke-width="1"/>
<circle cx="712.5" cy="219" r="5" fill="#12eef0" stroke="#103a3c" stroke-width="1"/>
<circle cx="742.5" cy="219" r="5" fill="#12eef0" stroke="#103a3c" stroke-width="1"/>
</g>
</svg>

<div id="prop" class="abs"></div>
<div class="abs" style="left:1514px;top:143px;width:6px;height:877px;background:#14171a"></div>
<div class="abs ui" style="left:1528px;top:148px;font-size:14.5px;line-height:19px;white-space:nowrap"><span class="sx" style="transform:scaleX(0.767);margin-right:-27.0px">パーツプロパティ</span></div>
<div class="abs" style="left:1520px;top:171px;width:251px;height:2px;background:#3a3f44"></div>
<svg class="abs" style="left:1739px;top:147px" width="22" height="21" viewBox="0 0 22 21"><rect x="1" y="1" width="20" height="19" fill="#1b1e21" stroke="#e6e6e6" stroke-width="1.600"/><rect x="15.500" y="2" width="4.500" height="17" fill="#f0b21a"/><path d="M6 4v13l8-6.500z" fill="#fff"/></svg>
<svg class="abs" style="left:1525px;top:185px" width="19" height="19" viewBox="0 0 19 19"><path d="M2 8h10v8H2zM7 3h10v8H7zM2 8l5-5M12 8l5-5M2 16l5-5M12 16l5-5" fill="none" stroke="#aeb3b8" stroke-width="1"/><path d="M2 8h10v8H2z" fill="none" stroke="#35c4ee" stroke-width="1.400"/><path d="M2 8l5-5h10l-5 5" fill="none" stroke="#35c4ee" stroke-width="1.400"/></svg>
<svg class="abs" style="left:1525px;top:212px" width="19" height="19" viewBox="0 0 19 19"><path d="M2 8h10v8H2zM7 3h10v8H7zM2 8l5-5M12 8l5-5M2 16l5-5M12 16l5-5" fill="none" stroke="#aeb3b8" stroke-width="1"/><path d="M2 16l5-5M12 16l5-5M2 8l5-5M12 8l5-5" stroke="#2fbf3a" stroke-width="1.400"/></svg>
<svg class="abs" style="left:1525px;top:239px" width="19" height="19" viewBox="0 0 19 19"><path d="M2 8h10v8H2zM7 3h10v8H7zM2 8l5-5M12 8l5-5M2 16l5-5M12 16l5-5" fill="none" stroke="#aeb3b8" stroke-width="1"/><path d="M2 8v8M12 8v8M7 3v8M17 3v8" stroke="#e6a820" stroke-width="1.400"/></svg>
<div class="pl ui" style="left:1549px;top:186px">W:</div>
<div class="inp" style="left:1610px;top:184px;width:112px">460</div>
<div class="pl" style="left:1727px;top:187px;font-size:11px;letter-spacing:2px;font-family:'Liberation Mono',monospace">mm</div>
<div class="pl ui" style="left:1549px;top:213px">D:</div>
<div class="inp" style="left:1610px;top:211px;width:112px">460</div>
<div class="pl" style="left:1727px;top:214px;font-size:11px;letter-spacing:2px;font-family:'Liberation Mono',monospace">mm</div>
<div class="pl ui" style="left:1549px;top:240px">H:</div>
<div class="inp" style="left:1610px;top:238px;width:112px">760</div>
<div class="pl" style="left:1727px;top:241px;font-size:11px;letter-spacing:2px;font-family:'Liberation Mono',monospace">mm</div>
<svg class="abs" style="left:1525px;top:267px" width="19" height="18" viewBox="0 0 19 18"><path d="M12 2L2 14h15" fill="none" stroke="#e6e6e6" stroke-width="1.600"/><path d="M8 14a6 6 0 0 0-1.500-5" fill="none" stroke="#e6e6e6" stroke-width="1.300"/></svg>
<div class="pl ui" style="left:1549px;top:267px">角度:</div>
<div class="inp" style="left:1610px;top:265px;width:80px">0</div>
<div class="pl ui" style="left:1695px;top:267px">度</div>
<svg class="abs" style="left:1525px;top:293px" width="19" height="19" viewBox="0 0 19 19"><path d="M2 8h10v8H2zM7 3h10v8H7zM2 8l5-5M12 8l5-5M12 16l5-5" fill="none" stroke="#aeb3b8" stroke-width="1"/><path d="M2 16l5-5h10l-5 5z" fill="#ee2a6a"/></svg>
<div class="pl ui" style="left:1549px;top:294px">配置高:</div>
<b class="abs cb on" style="left:1611px;top:296px"></b>
<div class="pl ui" style="left:1629px;top:294px">自動</div>
<div class="inp" style="left:1610px;top:321px;width:112px;background:#e4e4e4;color:#9a9a9a;border-color:#9a9da0">0</div>
<div class="pl" style="left:1727px;top:324px;font-size:11px;letter-spacing:2px;font-family:'Liberation Mono',monospace">mm</div>
<div class="btn ui" style="left:1610px;top:348px;width:147px;text-align:center">詳細設定</div>
<div class="gold" style="top:378px"></div>
<svg class="abs" style="left:1525px;top:394px" width="19" height="21" viewBox="0 0 19 21"><ellipse cx="9.500" cy="16" rx="8" ry="3" fill="none" stroke="#e6a820" stroke-width="1.800"/><path d="M5 4l5-2l4 2v9l-4 2l-5-2z" fill="#dfe3e6"/><path d="M10 6v9" stroke="#9aa0a6"/><path d="M5 4l5 2l4-2" stroke="#9aa0a6" fill="none"/></svg>
<div class="pl ui" style="left:1549px;top:395px">回転:</div>
<div class="inp" style="left:1590px;top:394px;width:48px">15</div>
<div class="pl ui" style="left:1644px;top:395px">度</div>
<div class="btn" style="left:1672px;top:394px;width:25px;height:21px"></div>
<svg class="abs" style="left:1672px;top:394px" width="25" height="21" viewBox="0 0 25 21"><g><path d="M7.800 8.200A5.800 5.800 0 1 0 13 5.700" fill="none" stroke="#f0f0f0" stroke-width="1.900"/><path d="M14 1.800l-5.500 4l6 2.800z" fill="#f0f0f0"/></g></svg>
<div class="btn" style="left:1702px;top:394px;width:25px;height:21px"></div>
<svg class="abs" style="left:1702px;top:394px" width="25" height="21" viewBox="0 0 25 21"><g transform="translate(25,0) scale(-1,1)"><path d="M7.800 8.200A5.800 5.800 0 1 0 13 5.700" fill="none" stroke="#f0f0f0" stroke-width="1.900"/><path d="M14 1.800l-5.500 4l6 2.800z" fill="#f0f0f0"/></g></svg>
<div class="btn ui" style="left:1526px;top:421px;width:112px;padding-left:5px">数値移動<i></i></div>
<div class="btn ui" style="left:1644px;top:421px;width:112px;padding-left:5px">数値<span class="sx" style="transform:scaleX(0.782);margin-right:-9.5px">コピー</span><i></i></div>
<div class="gold" style="top:451px"></div>
<svg class="abs" style="left:1525px;top:466px" width="20" height="20" viewBox="0 0 20 20"><path d="M10 2C4 2 1 6 1 10c0 4 4 7 8 6c2-.500 1-3 3-3c3 0 7 0 7-4c0-4-4-7-9-7z" fill="#e9c58c" stroke="#8a6a34" stroke-width=".800"/><circle cx="5.500" cy="8" r="1.700" fill="#d62a2a"/><circle cx="9" cy="5.500" r="1.700" fill="#2a6ad6"/><circle cx="13.500" cy="6.500" r="1.700" fill="#2aa33a"/><circle cx="6.500" cy="12.500" r="1.700" fill="#f0e020"/></svg>
<div class="pl ui" style="left:1549px;top:468px">表示色:</div>
<div class="btn" style="left:1610px;top:466px;width:147px"><i></i></div>
<div class="abs ui" style="left:1614px;top:469px;width:120px;height:16px;background:#fff;color:#000;font-size:14.500px;line-height:16px;text-align:center">自動</div>
<svg class="abs" style="left:1525px;top:494px" width="20" height="20" viewBox="0 0 20 20"><path d="M3 3h6l1.500 2H17v9H3z" fill="#c98a1a"/><path d="M1 6h6l1.500 2H15v10H1z" fill="#f0a828"/></svg>
<div class="pl ui" style="left:1549px;top:496px"><span class="sx" style="transform:scaleX(0.725);margin-right:-17.0px">カテゴリ:</span></div>
<div class="btn ui" style="left:1610px;top:493px;width:147px;padding-left:5px">家具<i></i></div>
<div class="gold" style="top:523px"></div>
<div class="abs ui" style="left:1526px;top:537px;width:205px;height:25px;border:1px solid #63676b;font-size:14px;line-height:23px;padding-left:3px;white-space:nowrap"><span class="sx" style="transform:scaleX(0.673);margin-right:-32.0px">ナイトテーブル</span>V03</div>
<div class="abs ui" style="left:1526px;top:568px;font-size:14px;line-height:19px;white-space:nowrap"><span class="sx" style="transform:scaleX(0.694);margin-right:-30.0px">ナイトテーブル</span>/W460×D460×<br>H760/0/白系/<span class="sx" style="transform:scaleX(0.696);margin-right:-34.0px">リクエストデータ</span></div>
<div class="abs" style="left:1736px;top:537px;width:20px;height:234px;background:#33383d"></div>
<svg class="abs" style="left:1736px;top:537px" width="20" height="234" viewBox="0 0 20 234"><path d="M3.500 31l6.500-6.500l6.500 6.500M3.500 203l6.500 6.500l6.500-6.500" fill="none" stroke="#4d5358" stroke-width="2.200"/></svg>
<div class="abs" style="left:1526px;top:778px;width:230px;height:161px;background:linear-gradient(#9fa3a6,#bfc1c3 40%,#e4e5e6)"></div>
<svg class="abs" style="left:1526px;top:778px" width="230" height="161" viewBox="0 0 230 161">
<path d="M50 10l97-3l28 2l-2 6l-28 1l-93 1z" fill="#fdfdfd"/>
<path d="M62 16l82-1l-1 104c-14-8-42-12-55-1l-18 2z" fill="#fafafa"/>
<path d="M144 15l27-2l-4 97l-24 12z" fill="#e1e2e3"/>
<path d="M66 40l74-1" stroke="#d9dadb" stroke-width="1.200" fill="none"/>
<path d="M72 46h66v62c-14-5-40-6-58 4l-8 0z" fill="none" stroke="#e8e9ea"/>
<path d="M70 119l4 0l-1 36l-3 0zM137 119l5 0l-2 38l-4 0zM165 108l3-1l-2 38l-3 0zM103 117l3 0l-1 16l-2 0z" fill="#f6f6f6"/>
<circle cx="95" cy="29" r="3.200" fill="none" stroke="#d8a020" stroke-width="1.600"/><ellipse cx="71" cy="70" rx="1.800" ry="4" fill="none" stroke="#d8a020" stroke-width="1.500"/>
</svg>

<div id="frame" class="abs" style="left:0;top:0;width:1770px;height:1019px;border:1px solid #b9b9b9;border-radius:8px;box-shadow:0 0 0 30px #d4d5d7;pointer-events:none"></div>
</body>
</html>
